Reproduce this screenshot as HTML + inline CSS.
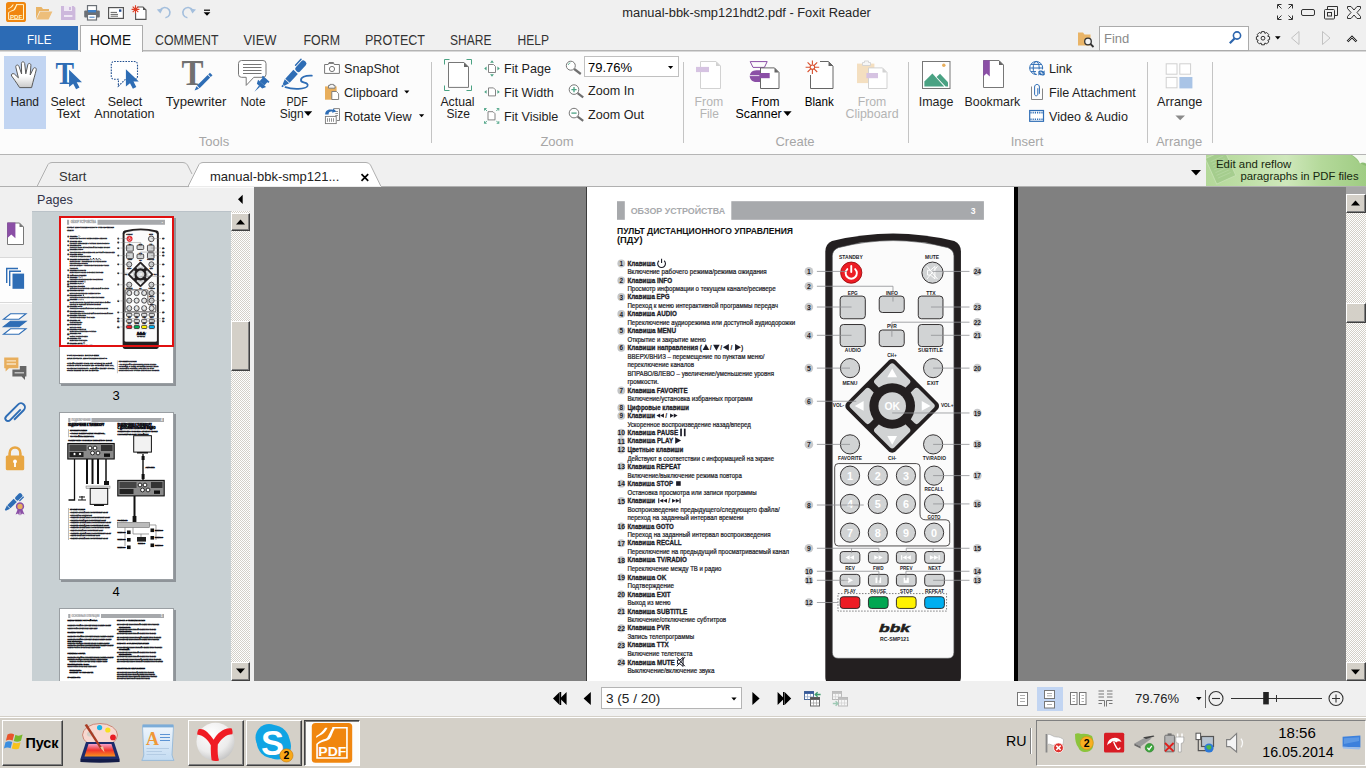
<!DOCTYPE html>
<html lang="ru">
<head>
<meta charset="utf-8">
<title>manual-bbk-smp121hdt2.pdf - Foxit Reader</title>
<style>
html,body{margin:0;padding:0;}
body{width:1366px;height:768px;overflow:hidden;position:relative;background:#f0f0f0;font-family:"Liberation Sans",sans-serif;font-size:13px;color:#1e1e1e;}
.a{position:absolute;}
.t{position:absolute;white-space:nowrap;line-height:1;}
.c{position:absolute;white-space:nowrap;line-height:1;text-align:center;}
svg{position:absolute;overflow:visible;}
.gl{color:#a6a6a6;}
.dis{color:#b4b4b4;}
</style>
</head>
<body>
<!-- ===== Title bar ===== -->
<div class="a" id="titlebar" style="left:0;top:0;width:1366px;height:25px;background:#f0f0f0;"></div>
<div class="c" style="left:546.6px;top:6.8px;width:400px;font-size:12.85px;color:#262626;">manual-bbk-smp121hdt2.pdf - Foxit Reader</div>
<!-- ===== Tab row ===== -->
<div class="a" style="left:0;top:50px;width:1366px;height:1px;background:#b4b4b4;"></div><div class="a" style="left:0;top:51px;width:1366px;height:1px;background:#d8d8d8;"></div>
<div class="a" style="left:0;top:26px;width:78px;height:24px;background:#2c6bb5;"></div>
<div class="a" style="left:80px;top:25px;width:61px;height:27px;background:#fdfdfd;border:1px solid #ababab;border-bottom:none;box-sizing:content-box;"></div>
<!-- find box -->
<div class="a" style="left:1099px;top:26px;width:150px;height:25px;background:#fff;border:1px solid #ababab;box-sizing:border-box;"></div>
<div class="t" style="left:1104px;top:32px;font-size:13px;color:#8a8a8a;">Find</div>
<svg style="left:0;top:26px;" width="600" height="26" viewBox="0 26 600 26" font-family="Liberation Sans, sans-serif" font-size="14.4">
<text x="27" y="44.3" fill="#fff" font-size="13.4" textLength="24.5" lengthAdjust="spacingAndGlyphs">FILE</text>
<text x="90" y="44.5" fill="#111" font-size="15" textLength="41" lengthAdjust="spacingAndGlyphs">HOME</text>
<text x="155" y="44.5" fill="#333" textLength="63.5" lengthAdjust="spacingAndGlyphs">COMMENT</text>
<text x="243.5" y="44.5" fill="#333" textLength="33" lengthAdjust="spacingAndGlyphs">VIEW</text>
<text x="303.5" y="44.5" fill="#333" textLength="36.5" lengthAdjust="spacingAndGlyphs">FORM</text>
<text x="365" y="44.5" fill="#333" textLength="60" lengthAdjust="spacingAndGlyphs">PROTECT</text>
<text x="450" y="44.5" fill="#333" textLength="41.5" lengthAdjust="spacingAndGlyphs">SHARE</text>
<text x="517.5" y="44.5" fill="#333" textLength="31.5" lengthAdjust="spacingAndGlyphs">HELP</text>
</svg>
<!-- title bar icons -->
<svg style="left:0;top:0;" width="220" height="26" viewBox="0 0 220 26">
  <!-- foxit logo -->
  <rect x="6" y="2" width="20" height="20" rx="2.600" fill="#f0860f"/>
  <path d="M16.200 4.600 H23.500 V19.400 H8.600 V12.400" fill="none" stroke="#fff3c8" stroke-width="1"/>
  <path d="M8.200 8.600 C10 7.600 11.400 6.200 12.600 4.400 L13.800 4.400 C13 6 12.200 7 11 7.800 C10 8.200 9 8.800 8.200 9.600 Z" fill="#fff3c8"/>
  <path d="M8.400 12.400 C10.400 10.200 12.400 10.400 13.600 9.400 C14.600 8 15.200 6 16.400 4.200 L17.400 4.800 C16.200 6.600 16 8.800 14.800 10 C13.400 11.200 10.600 11 8.800 13 Z" fill="#fff3c8"/>
  <text x="16.100" y="18.500" font-family="Liberation Sans, sans-serif" font-size="5.600" font-weight="bold" fill="#fff3c8" text-anchor="middle" textLength="12.400" lengthAdjust="spacingAndGlyphs">PDF</text>
  <!-- folder -->
  <path d="M36 7 H41.5 L43 9 H49 V11 H39.5 L36 19 Z" fill="#e9b467"/>
  <path d="M40.2 11.6 H52.4 L48.6 19.6 H36.4 Z" fill="#edbe7a"/>
  <!-- save (disabled) -->
  <path d="M61 6 H73.6 L75.4 7.8 V20 H61 Z" fill="#cdb8dc"/>
  <rect x="64" y="6" width="8" height="5" fill="#efe8f4"/><rect x="69" y="7" width="2" height="3" fill="#cdb8dc"/>
  <rect x="64" y="15" width="8.4" height="2" fill="#efe8f4"/>
  <!-- printer -->
  <rect x="87.5" y="5.6" width="9" height="6" fill="#fff" stroke="#6b7076" stroke-width="1.2"/>
  <rect x="84.2" y="10.6" width="15.6" height="7" rx="1" fill="#6b7076"/>
  <rect x="88" y="10" width="8" height="2.4" fill="#3f7fc6"/>
  <rect x="87.5" y="14.4" width="9" height="5.6" fill="#fff" stroke="#6b7076" stroke-width="1.2"/>
  <path d="M89.4 17.2 H94.6" stroke="#3f7fc6" stroke-width="1"/>
  <!-- email -->
  <rect x="108.6" y="7.6" width="14.8" height="10.8" fill="#fff" stroke="#555" stroke-width="1.2"/>
  <rect x="119" y="9.4" width="2.4" height="2.4" fill="#2a4f8f"/>
  <path d="M110.6 12.4 H117 M110.6 14.4 H118 M110.6 16.2 H118" stroke="#555" stroke-width="0.9"/>
  <!-- new: star + page -->
  <path d="M137.5 7 H143 L146 10 V19.4 H135.6 V13" fill="#fff" stroke="#555" stroke-width="1.1"/>
  <path d="M143 7 V10 H146 Z" fill="#555"/>
  <path d="M135.5 5.2 V13.6 M131.6 9.4 H139.4 M132.7 6.6 L138.3 12.2 M138.3 6.6 L132.7 12.2" stroke="#de3b22" stroke-width="1.1"/>
  <!-- undo / redo -->
  <path d="M160.2 10.2 A5.2 5.2 0 1 1 165.4 17.8" fill="none" stroke="#a4bfdd" stroke-width="1.6"/>
  <path d="M156.8 9.4 L163 8.6 L160.4 13.6Z" fill="#a4bfdd"/>
  <path d="M192.6 10.2 A5.2 5.2 0 1 0 187.4 17.8" fill="none" stroke="#a4bfdd" stroke-width="1.6"/>
  <path d="M196 9.4 L189.8 8.6 L192.4 13.6Z" fill="#a4bfdd"/>
  <!-- customize arrow -->
  <path d="M204 10.2 H210" stroke="#000" stroke-width="1.2"/><path d="M203.6 12.2 H210.4 L207 15.8Z" fill="#000"/>
</svg>
<!-- window controls -->
<svg style="left:1270px;top:0;" width="96" height="26" viewBox="1270 0 96 26" fill="none" stroke="#333" stroke-width="1">
  <path d="M1277.5 8.5 V4.5 H1281.5 M1278 5 L1281.5 8.5 M1288.5 4.5 H1292.5 V8.5 M1292 5 L1288.5 8.5 M1277.5 15.5 V19.5 H1281.5 M1278 19 L1281.5 15.5 M1292.5 15.5 V19.5 H1288.5 M1292 19 L1288.5 15.5"/>
  <rect x="1301.5" y="9.5" width="13" height="6" rx="1.5"/>
  <path d="M1327.5 9.5 V6.5 H1337.5 V15.5 H1334.5"/><rect x="1324.500" y="9.5" width="10" height="9.500" rx="1"/><rect x="1327.500" y="12.5" width="4" height="3.500"/>
  <path d="M1347.5 6.500 H1351 L1354 10 L1357 6.500 H1360.500 V8.500 L1357 12.500 L1360.500 16.500 V18.500 H1357 L1354 15 L1351 18.500 H1347.500 V16.500 L1351 12.500 L1347.500 8.500 Z"/>
</svg>
<!-- find area icons -->
<svg style="left:1070px;top:26px;" width="296" height="26" viewBox="1070 26 296 26">
  <path d="M1078 32.500 H1083 L1084.500 34.500 H1090.500 V45.500 H1078 Z" fill="#e9b467"/>
  <circle cx="1088" cy="41.500" r="3.300" fill="#f4f4f4" stroke="#333" stroke-width="1.300"/><path d="M1090.500 44 L1093.500 47" stroke="#333" stroke-width="1.800"/>
  <circle cx="1237" cy="35.500" r="3.600" fill="#fff" stroke="#2c65ad" stroke-width="1.600"/><path d="M1234.500 38.500 L1229.800 43.200" stroke="#2c65ad" stroke-width="2.200"/>
  <g transform="translate(1263,38.200)" fill="none" stroke="#333" stroke-width="1">
    <path d="M-1.400 -6.600 H1.400 L1.900 -4.800 L3.700 -5.700 L5.700 -3.700 L4.800 -1.900 L6.600 -1.400 V1.400 L4.800 1.900 L5.700 3.700 L3.700 5.700 L1.900 4.800 L1.400 6.600 H-1.400 L-1.900 4.800 L-3.700 5.700 L-5.700 3.700 L-4.800 1.900 L-6.600 1.400 V-1.400 L-4.800 -1.900 L-5.700 -3.700 L-3.700 -5.700 L-1.900 -4.800 Z"/>
    <circle r="1.900"/>
  </g>
  <path d="M1275 36.200 H1280.600 L1277.800 39.400Z" fill="#000"/>
  <path d="M1299 31.500 V44.500 L1291.500 38 Z" fill="none" stroke="#c2c2c2" stroke-width="1"/>
  <path d="M1322.500 31.500 V44.500 L1330 38 Z" fill="none" stroke="#c2c2c2" stroke-width="1"/>
  <path d="M1347.500 41.500 L1352 37 L1356.500 41.500" fill="none" stroke="#222" stroke-width="2.400"/>
  <path d="M1347.500 41.500 L1352 37 L1356.500 41.500" fill="none" stroke="#f0f0f0" stroke-width="0.700"/>
</svg>
<!-- ===== Ribbon ===== -->
<div class="a" id="ribbon" style="left:0;top:52px;width:1366px;height:102px;background:#fcfcfc;"></div>
<div class="a" style="left:0;top:154px;width:1366px;height:1px;background:#b5b5b5;"></div>
<!-- Hand (active) -->
<div class="a" style="left:4px;top:56px;width:42px;height:73px;background:#c2d5f2;"></div>
<div class="t" style="left:344px;top:62.8px;font-size:12.6px;">SnapShot</div>
<div class="t" style="left:344px;top:86.8px;font-size:12.6px;">Clipboard</div>
<div class="t" style="left:344px;top:110.8px;font-size:12.6px;">Rotate View</div>
<div class="c gl" style="left:184px;top:134.5px;width:60px;">Tools</div>
<div class="a" style="left:431px;top:62px;width:1px;height:81px;background:#c4c4c4;"></div>
<!-- Zoom group -->
<div class="t" style="left:504px;top:62.8px;font-size:12.6px;">Fit Page</div>
<div class="t" style="left:504px;top:86.8px;font-size:12.6px;">Fit Width</div>
<div class="t" style="left:504px;top:110.8px;font-size:12.6px;">Fit Visible</div>
<div class="a" style="left:584px;top:56px;width:95px;height:21px;background:#fff;border:1px solid #c0c0c0;box-sizing:border-box;"></div>
<div class="t" style="left:588px;top:61px;color:#000;">79.76%</div>
<div class="t" style="left:588px;top:84.8px;font-size:12.6px;">Zoom In</div>
<div class="t" style="left:588px;top:108.8px;font-size:12.6px;">Zoom Out</div>
<div class="c gl" style="left:527px;top:134.5px;width:60px;">Zoom</div>
<div class="a" style="left:683px;top:62px;width:1px;height:81px;background:#c4c4c4;"></div>
<!-- Create group -->
<div class="c gl" style="left:765px;top:134.5px;width:60px;">Create</div>
<div class="a" style="left:908px;top:62px;width:1px;height:81px;background:#c4c4c4;"></div>
<!-- Insert group -->
<div class="t" style="left:1049px;top:62.8px;font-size:12.6px;">Link</div>
<div class="t" style="left:1049px;top:86.8px;font-size:12.6px;">File Attachment</div>
<div class="t" style="left:1049px;top:110.8px;font-size:12.6px;">Video &amp; Audio</div>
<div class="c gl" style="left:997px;top:134.5px;width:60px;">Insert</div>
<div class="a" style="left:1147px;top:62px;width:1px;height:81px;background:#c4c4c4;"></div>
<div class="c gl" style="left:1139px;top:134.5px;width:80px;">Arrange</div>
<div class="a" style="left:1212px;top:62px;width:1px;height:81px;background:#c4c4c4;"></div>
<svg style="left:0;top:52px;" width="1366" height="102" viewBox="0 52 1366 102" font-family="Liberation Sans, sans-serif" font-size="13" text-anchor="middle">
<text x="24.7" y="106.4" fill="#1e1e1e" textLength="28.6" lengthAdjust="spacingAndGlyphs">Hand</text>
<text x="67.8" y="106.4" fill="#1e1e1e" textLength="34.5" lengthAdjust="spacingAndGlyphs">Select</text>
<text x="68.2" y="118.4" fill="#1e1e1e" textLength="23.6" lengthAdjust="spacingAndGlyphs">Text</text>
<text x="125" y="106.4" fill="#1e1e1e" textLength="34.5" lengthAdjust="spacingAndGlyphs">Select</text>
<text x="124.4" y="118.4" fill="#1e1e1e" textLength="60.3" lengthAdjust="spacingAndGlyphs">Annotation</text>
<text x="196.1" y="106.4" fill="#1e1e1e" textLength="60.6" lengthAdjust="spacingAndGlyphs">Typewriter</text>
<text x="253" y="106.4" fill="#1e1e1e" textLength="24.9" lengthAdjust="spacingAndGlyphs">Note</text>
<text x="297.1" y="106.4" fill="#1e1e1e" textLength="21.4" lengthAdjust="spacingAndGlyphs">PDF</text>
<text x="291.7" y="118.4" fill="#1e1e1e" textLength="23.9" lengthAdjust="spacingAndGlyphs">Sign</text>
<text x="457.5" y="106.4" fill="#1e1e1e" textLength="34.2" lengthAdjust="spacingAndGlyphs">Actual</text>
<text x="458.2" y="118.4" fill="#1e1e1e" textLength="23.4" lengthAdjust="spacingAndGlyphs">Size</text>
<text x="708.9" y="106.4" fill="#b4b4b4" textLength="28.6" lengthAdjust="spacingAndGlyphs">From</text>
<text x="709.3" y="118.4" fill="#b4b4b4" textLength="19.3" lengthAdjust="spacingAndGlyphs">File</text>
<text x="765.5" y="106.4" fill="#000" textLength="28" lengthAdjust="spacingAndGlyphs">From</text>
<text x="758.6" y="118.4" fill="#000" textLength="46.2" lengthAdjust="spacingAndGlyphs">Scanner</text>
<text x="819.3" y="106.4" fill="#000" textLength="29" lengthAdjust="spacingAndGlyphs">Blank</text>
<text x="872" y="106.4" fill="#b4b4b4" textLength="28.6" lengthAdjust="spacingAndGlyphs">From</text>
<text x="872" y="118.4" fill="#b4b4b4" textLength="53.1" lengthAdjust="spacingAndGlyphs">Clipboard</text>
<text x="936.1" y="106.4" fill="#1e1e1e" textLength="34.6" lengthAdjust="spacingAndGlyphs">Image</text>
<text x="992.4" y="106.4" fill="#1e1e1e" textLength="55.6" lengthAdjust="spacingAndGlyphs">Bookmark</text>
<text x="1179.7" y="106.4" fill="#1e1e1e" textLength="45.2" lengthAdjust="spacingAndGlyphs">Arrange</text>
</svg>
<!-- ribbon icons -->
<svg style="left:0;top:52px;" width="1366" height="102" viewBox="0 52 1366 102">
<defs>
  <linearGradient id="hg" x1="0" y1="0" x2="0" y2="1"><stop offset="0.55" stop-color="#fff"/><stop offset="1" stop-color="#c9c9c9"/></linearGradient>
</defs>
<!-- hand -->
<path d="M19.600 87.600 C16 82 13.500 78.500 11.600 76 C10.600 74.400 12.600 72.800 14.400 74 L18.400 77.800 L15.800 67.200 C15.400 64.800 18.200 64.200 19 66.400 L21.600 74 L21.400 63.600 C21.400 61.200 24.400 61.200 24.700 63.600 L25.800 73.800 L27.800 64.800 C28.300 62.600 31 63.200 30.900 65.400 L30.200 75 L33.200 68.800 C34.200 66.800 36.800 67.800 36.200 70 C35 75 33.400 80 31.600 87.600 Z" fill="url(#hg)" stroke="#5a5a5a" stroke-width="1" stroke-linejoin="round"/>
<!-- select text -->
<text x="64.700" y="84" font-family="Liberation Serif, serif" font-size="32" font-weight="bold" fill="#2e6db5" text-anchor="middle" textLength="18.500" lengthAdjust="spacingAndGlyphs">T</text>
<path id="cur" d="M0 0 V17.200 L4.100 14 L7 19.500 L10.400 17.700 L7.600 12.400 H12.900 Z" transform="translate(69.100,69.800)" fill="#2e6db5"/>
<!-- select annotation -->
<path d="M118.500 79.300 H114.500 Q111.300 79.300 111.300 76 V64.800 Q111.300 61.500 114.500 61.500 H134.300 Q137.500 61.500 137.500 64.800 V76 Q137.500 79.300 134.300 79.300 H125.500 L118.300 86.200 Z" fill="#fff" stroke="#1f4e8f" stroke-width="1.100" stroke-dasharray="1.600 1.200"/>
<path d="M0 0 V17.200 L4.100 14 L7 19.500 L10.400 17.700 L7.600 12.400 H12.900 Z" transform="translate(125.900,69.200)" fill="#2e6db5"/>
<!-- typewriter -->
<text x="192.500" y="85" font-family="Liberation Serif, serif" font-size="36.500" font-weight="bold" fill="#707070" text-anchor="middle" textLength="22" lengthAdjust="spacingAndGlyphs">T</text>
<g transform="translate(211.200,74) rotate(45)"><rect x="-1.800" y="0" width="3.600" height="2.400" fill="#2e6db5"/><rect x="-1.800" y="3.200" width="3.600" height="15" fill="#2e6db5"/><path d="M-1.800 19 H1.800 L0 23.500 Z" fill="#2e6db5"/></g>
<!-- note -->
<path d="M241.500 60.500 H263 Q266 60.500 266 63.500 V74.300 Q266 77.300 263 77.300 H253.800 L246.200 85.400 V77.300 H241.500 Q238.500 77.300 238.500 74.300 V63.500 Q238.500 60.500 241.500 60.500 Z" fill="#fff" stroke="#777" stroke-width="1"/>
<path d="M243 64.500 H261.500 M243 67.500 H261.500 M243 70.500 H261.500 M243 73.500 H261.500" stroke="#666" stroke-width="0.900"/>
<g transform="translate(260.200,85.400) rotate(42)" fill="#2e6db5"><rect x="-3.200" y="-8" width="6.400" height="5.400"/><path d="M-5.400 -2.800 H5.400 L3.600 1 H-3.600 Z"/><path d="M-0.800 1 H0.800 L0 8.600 Z"/><rect x="-4.400" y="-9" width="8.800" height="1.800"/></g>
<!-- pdf sign -->
<g transform="translate(305.200,61.400) rotate(42.500)" fill="#2e6db5"><rect x="-3" y="0" width="6" height="13" rx="2.400"/><rect x="-5.300" y="0.500" width="1.500" height="9.500" rx="0.700"/><rect x="-3" y="14.200" width="6" height="12"/><path d="M-3 27 H3 L1.200 32 H-1.200 Z"/><rect x="-0.900" y="32.400" width="1.800" height="2" /></g>
<path d="M311.800 75.600 C305 75.200 300.500 77.500 301 80.500 C301.500 83.500 309 82 307.500 86 C306 89.500 292 89.500 285.500 87.200" fill="none" stroke="#2e6db5" stroke-width="1.800" stroke-linecap="round"/>
<path d="M293.800 88 Q308.400 83.800 309.400 75.400 Q304.600 84.800 293.800 88Z" fill="#fff" opacity="0"/>
<path d="M304 111.300 H312.200 L308.100 116 Z" fill="#000"/>
<!-- snapshot -->
<path d="M324.600 64.500 H328.200 L329 62.600 H333.400 L334.200 64.500 H339.400 V73.400 H324.600 Z" fill="#fff" stroke="#777" stroke-width="1"/>
<rect x="329" y="62.300" width="4.400" height="1.600" fill="#777"/>
<circle cx="332" cy="69" r="2.600" fill="#fff" stroke="#777" stroke-width="1"/>
<!-- clipboard -->
<rect x="325" y="86.400" width="11.600" height="13.300" fill="#e8ae5c"/>
<path d="M328.500 88.200 V85.400 H330 V84.400 H333.600 V85.400 H335 V88.200 Z" fill="#f3f3f3" stroke="#777" stroke-width="0.900"/>
<path d="M331.800 91.500 H336.400 L338.600 93.700 V99.500 H331.800 Z" fill="#fff" stroke="#777" stroke-width="0.900"/>
<path d="M404.200 90.400 H409.400 L406.800 93.400 Z" fill="#000"/>
<!-- rotate view -->
<path d="M333.500 108.600 H339.500 V120.500 H336.600" fill="none" stroke="#777" stroke-width="0.900"/>
<path d="M335.300 111.500 H338 M335.300 113.500 H338 M335.300 115.500 H338" stroke="#777" stroke-width="0.800"/>
<rect x="325.400" y="116.400" width="10.800" height="7.200" fill="#fff" stroke="#777" stroke-width="0.900"/>
<path d="M327.500 118.200 V121.800 M329.500 118.200 V121.800 M331.500 118.200 V121.800 M333.500 118.200 V121.800" stroke="#777" stroke-width="0.800"/>
<path d="M325.200 114.600 C325 110.600 328.600 108.800 332.800 109.800 L333.200 108.400 L336.400 111.400 L332 112.800 L332.400 111.600 C329.800 111.200 328.400 112.400 328.600 114.600 Z" fill="#2e6db5"/>
<path d="M419 114.200 H424.200 L421.600 117.200 Z" fill="#000"/>
<!-- actual size -->
<path d="M448.500 62.500 H464 L468.500 67 V87.400 H448.500 Z" fill="#fff" stroke="#777" stroke-width="1"/>
<path d="M464 62.500 V67 H468.500 Z" fill="#666"/>
<path d="M444.500 64.500 V59.500 H449.500 M466.500 59.500 H471.500 V64.500 M444.500 85.500 V90.500 H449.500 M466.500 90.500 H471.500 V85.500" fill="none" stroke="#4aa283" stroke-width="1"/>
<!-- fit page -->
<g fill="#4aa283" stroke="none">
<path d="M488.500 64.500 H493.500 L495.500 66.500 V72.500 H488.500 Z" fill="#fff" stroke="#777" stroke-width="0.900"/>
<path d="M486.600 66.600 V70.400 L484.200 68.500 Z M497.400 66.600 V70.400 L499.800 68.500 Z M490.100 62.700 H493.900 L492 60.300 Z M490.100 74.300 H493.900 L492 76.700 Z"/>
<path d="M488.500 87.900 H493.500 L495.500 89.900 V95.900 H488.500 Z" fill="#fff" stroke="#777" stroke-width="0.900"/>
<path d="M486.600 90 V93.800 L484.200 91.900 Z M497.400 90 V93.800 L499.800 91.900 Z"/>
<path d="M488 111.700 H493 L495 113.700 V119.900 H488 Z" fill="#fff" stroke="#777" stroke-width="0.900"/>
</g>
<path d="M484.500 108.500 L487 111 M484.500 110.600 V108.500 H486.600 M498.800 108.500 L496.300 111 M498.800 110.600 V108.500 H496.700 M484.500 123.300 L487 120.800 M484.500 121.200 V123.300 H486.600 M498.800 123.300 L496.300 120.800 M498.800 121.200 V123.300 H496.700" fill="none" stroke="#4aa283" stroke-width="0.900"/>
<!-- magnifiers -->
<circle cx="570.800" cy="65.700" r="4.500" fill="#fff" stroke="#777" stroke-width="1"/><path d="M574.200 69 L580.800 74" stroke="#707070" stroke-width="2.200"/><path d="M568.200 65 Q568.600 63.200 570.400 62.800" fill="none" stroke="#4aa283" stroke-width="0.800"/>
<circle cx="574" cy="89.600" r="4.800" fill="#fff" stroke="#777" stroke-width="1"/><path d="M577.600 93.200 L583.200 97.400" stroke="#707070" stroke-width="2.200"/><path d="M571.400 89.600 H576.600 M574 87 V92.200" stroke="#4aa283" stroke-width="1.300"/>
<circle cx="574" cy="113.100" r="4.800" fill="#fff" stroke="#777" stroke-width="1"/><path d="M577.600 116.700 L583.200 120.900" stroke="#707070" stroke-width="2.200"/><path d="M571.400 113.100 H576.600" stroke="#4aa283" stroke-width="1.300"/>
<path d="M668 66 H673.200 L670.600 69 Z" fill="#000"/>
<!-- from file (disabled) -->
<path d="M700.500 61.500 H716 L720.500 66 V88.500 H700.500 Z" fill="#fff" stroke="#d2d2d2" stroke-width="1"/><path d="M716 61.500 V66 H720.500 Z" fill="#d2d2d2"/>
<rect x="696" y="66.900" width="13" height="5.200" fill="#d6c3e2"/>
<!-- from scanner -->
<path d="M750.200 61.600 H767.200 L764.400 67.400 H753 Z" fill="none" stroke="#8b4fa6" stroke-width="1"/>
<path d="M756.500 70.200 H764 V82 H756.500 C747.500 82 747.500 70.200 756.500 70.200 Z" fill="#8b4fa6"/>
<path d="M749.400 75.600 H762" stroke="#fff" stroke-width="0.800"/>
<path d="M760.500 67.900 H774.500 L779 72.400 V88.500 H760.500 Z" fill="#fff" stroke="#666" stroke-width="1"/><path d="M774.500 67.900 V72.400 H779 Z" fill="#666"/>
<rect x="759.300" y="73" width="10.400" height="5.200" fill="#8b4fa6"/>
<path d="M783.400 111.300 H791.600 L787.500 116 Z" fill="#000"/>
<!-- blank -->
<path d="M820 61.500 H828.500 L833 66 V88.500 H810.500 V75" fill="#fff" stroke="#666" stroke-width="1"/><path d="M828.500 61.500 V66 H833 Z" fill="#666"/>
<g transform="translate(812.400,67.200)" stroke="#d9502e" stroke-width="1.100" fill="none"><path d="M0 -6.800 V-2.400 M0 6.800 V2.400 M-6.800 0 H-2.400 M6.800 0 H2.400 M-4.800 -4.800 L-1.700 -1.700 M4.800 4.800 L1.700 1.700 M-4.800 4.800 L-1.700 1.700 M4.800 -4.800 L1.700 -1.700"/><circle r="2.200"/></g>
<!-- from clipboard (disabled) -->
<rect x="857" y="63.600" width="17.400" height="19.500" fill="#f4dfc0"/>
<path d="M862.500 65.500 V62.500 H864.500 V61 H868.500 V62.500 H870.500 V65.500 Z" fill="#f6f6f6" stroke="#d2d2d2" stroke-width="0.900"/>
<path d="M868.500 67.900 H882.500 L887 72.400 V88.500 H868.500 Z" fill="#fff" stroke="#d2d2d2" stroke-width="1"/><path d="M882.500 67.900 V72.400 H887 Z" fill="#d2d2d2"/>
<rect x="866.400" y="73" width="11.600" height="5.200" fill="#d6c3e2"/>
<!-- image -->
<rect x="922.500" y="61.500" width="27.500" height="27" fill="#fff" stroke="#777" stroke-width="1"/>
<path d="M924.400 86.400 V81.400 L932.400 73.400 L944.200 86.400 Z" fill="#4aa283"/><path d="M936.600 77 L940 73.800 L948 82.200 V86.400 H945.600 Z" fill="#4aa283"/>
<circle cx="943.800" cy="65.200" r="1.700" fill="#e8ae5c"/>
<!-- bookmark -->
<path d="M983.500 60.500 H999 L1003.500 65 V87.500 H983.500 Z" fill="#fff" stroke="#777" stroke-width="1"/><path d="M999 60.500 V65 H1003.500 Z" fill="#666"/>
<path d="M983.200 60.200 H989.800 V76.600 L986.500 73.400 L983.200 76.600 Z" fill="#8b4fa6"/>
<!-- link -->
<g fill="none" stroke="#2e6db5" stroke-width="1"><circle cx="1036.200" cy="68" r="6.500"/><ellipse cx="1036.200" cy="68" rx="3" ry="6.500"/><path d="M1029.700 68 H1042.700 M1031 64.400 H1041.400 M1031 71.600 H1036"/></g>
<rect x="1036.800" y="69.400" width="9" height="6.600" fill="#fcfcfc"/>
<path d="M1038 72.600 C1038 70 1042 70 1043.400 71.400 L1044.600 70.200 V73.600 H1041.200 L1042.400 72.400 C1041.400 71.400 1039.400 71.600 1039.400 72.800 Z M1045 73.400 C1045 76 1041 76 1039.600 74.600 L1038.400 75.800 V72.400 H1041.800 L1040.600 73.600 C1041.600 74.600 1043.600 74.400 1043.600 73.200 Z" fill="#2e6db5"/>
<!-- attachment -->
<path d="M1031.500 86.500 V99.500 H1042.500 V88.500" fill="none" stroke="#777" stroke-width="0.900"/>
<path d="M1039.400 93.800 V87 C1039.400 83.600 1034.600 83.600 1034.600 87 V94 C1034.600 96.400 1037.800 96.400 1037.800 94 V88.200" fill="none" stroke="#2e6db5" stroke-width="1"/>
<!-- video -->
<rect x="1029.700" y="110.500" width="13.800" height="10.800" fill="#fff" stroke="#2e6db5" stroke-width="1.200"/>
<path d="M1030.400 112.600 H1043 M1030.400 119.200 H1043" stroke="#2e6db5" stroke-width="1.600" stroke-dasharray="1.200 1"/>
<!-- arrange -->
<g fill="#fff" stroke="#d0d0d0" stroke-width="1"><rect x="1166.200" y="63.800" width="10.800" height="10.400"/><rect x="1179.800" y="63.800" width="10.800" height="10.400"/><rect x="1166.200" y="77.400" width="10.800" height="10.400"/></g>
<rect x="1179.400" y="77" width="13" height="11.400" fill="#a9c4e6"/>
<path d="M1175.400 115.400 H1185 L1180.200 120.200 Z" fill="#8a8a8a"/>
</svg>
<!-- ===== Document tab strip ===== -->
<div class="a" style="left:0;top:155px;width:1366px;height:31px;background:#f0f0f0;"></div>
<div class="a" style="left:0;top:186px;width:1366px;height:1px;background:#b0b0b0;"></div>
<svg style="left:0;top:155px;" width="400" height="33" viewBox="0 0 400 33">
  <path d="M37 31.5 L48 9.5 Q49 7.5 52 7.5 L183 7.5 Q186 7.5 187.5 10 L192 19" fill="none" stroke="#b0b0b0" stroke-width="1"/>
  <path d="M188 31.5 L199 9.5 Q200 7.5 203 7.5 L366 7.5 Q369 7.5 370.5 10 L381 31.5 Z" fill="#ffffff" stroke="#b0b0b0" stroke-width="1"/>
  <path d="M189 32 L381 32" stroke="#fff" stroke-width="1.5"/>
  <path d="M361.500 19.200 L368.200 25.800 M368.200 19.200 L361.500 25.800" stroke="#000" stroke-width="1.700"/>
</svg>
<div class="t" style="left:59px;top:170px;color:#333;">Start</div>
<div class="t" style="left:210px;top:170px;color:#222;">manual-bbk-smp121...</div>
<svg style="left:1190.500px;top:169px;" width="12" height="8"><path d="M0 1 L10 1 L5 6.5Z" fill="#000"/></svg>
<!-- green ad banner -->
<div class="a" style="left:1206px;top:155px;width:160px;height:31px;background:linear-gradient(90deg,#b3d899 0%,#bfdfa7 25%,#cfe8bb 50%,#b4d99a 72%,#9fcc83 100%);overflow:hidden;">
<svg style="left:0;top:0;" width="160" height="31" viewBox="1206 155 160 31">
  <g transform="translate(1221,168) rotate(-24)"><rect x="-10.500" y="-15" width="21" height="28" fill="#9fc888" opacity="0.750"/><rect x="-10.500" y="-15" width="21" height="28" fill="none" stroke="#c4e0b0" stroke-width="1"/>
  <path d="M-7 -10 H7 M-7 -7 H7 M-7 -4 H7 M-7 -1 H7 M-7 2 H7 M-7 5 H7 M-7 8 H7" stroke="#b4d6a0" stroke-width="0.800"/></g>
  <path d="M1351 155 H1366 V166 Q1361 164.500 1358 161 Q1355 157.500 1351 155 Z" fill="#8cbc74"/>
  <path d="M1352 155 H1366 V163.500 Q1362.500 161.500 1360 163.500 Q1358.500 159 1352 155 Z" fill="#f4f8f0"/>
</svg>
</div>
<div class="t" style="left:1216px;top:159px;font-size:11.4px;color:#16280f;">Edit and reflow</div>
<div class="t" style="left:1240.500px;top:171px;font-size:11.3px;color:#16280f;">paragraphs in PDF files</div>
<!-- ===== Left navigation column ===== -->
<div class="a" style="left:0;top:187px;width:32px;height:494px;background:#f0f0f0;"></div>
<div class="a" style="left:0;top:257px;width:32px;height:47px;background:#fdfdfd;"></div>
<!-- Pages panel -->
<div class="t" style="left:37px;top:194px;font-size:12.6px;color:#33334a;">Pages</div>
<svg style="left:237px;top:194px;" width="8" height="12"><path d="M5.700 0.700 L5.700 9.900 L1 5.300Z" fill="#000"/></svg>
<div class="a" id="thumbs" style="left:32px;top:211px;width:199px;height:470px;background:#c8d0d3;overflow:hidden;">
<div class="a" style="left:29px;top:7px;width:115px;height:168px;background:#8f9499;"></div>
<div class="a" style="left:27px;top:5px;width:115px;height:168px;background:#fff;box-sizing:border-box;border:1px solid #9a9fa3;overflow:hidden;">
<svg class="th th3" style="left:-1px;top:-1px;transform:scale(0.267);transform-origin:0 0;" width="427" height="625" viewBox="0 0 427 625" font-family="Liberation Sans, sans-serif">
<rect x="30" y="14.2" width="7.8" height="18.6" fill="#a7a9ac"/>
<rect x="144.3" y="14.2" width="252.6" height="18.6" fill="#a7a9ac"/>
<text x="43.7" y="26.9"  font-size="9.6" font-weight="bold" fill="#a7a9ac" textLength="94.5" lengthAdjust="spacingAndGlyphs">ОБЗОР УСТРОЙСТВА</text>
<text x="383.7" y="26.9"  font-size="8.6" font-weight="bold" fill="#fff">3</text>
<text x="30" y="46.6"  font-size="8.6" font-weight="bold" fill="#111" textLength="176" lengthAdjust="spacingAndGlyphs">ПУЛЬТ ДИСТАНЦИОННОГО УПРАВЛЕНИЯ</text>
<text x="30" y="55.5"  font-size="8.6" font-weight="bold" fill="#111" textLength="25.5" lengthAdjust="spacingAndGlyphs">(ПДУ)</text>
<circle cx="34.29" cy="76.49" r="3.9" fill="#c3c5c7"/>
<text x="34.29" y="79.09"  font-size="7" font-weight="bold" fill="#1d1d28" text-anchor="middle" textLength="3.6" lengthAdjust="spacingAndGlyphs">1</text>
<text x="40.39" y="78.69"  font-size="7.2" font-weight="bold" fill="#1d1d28" stroke="#1d1d28" stroke-width="0.3" textLength="27.8" lengthAdjust="spacingAndGlyphs">Клавиша</text>
<text x="40.39" y="86.82"  font-size="6.7" fill="#1d1d28" stroke="#1d1d28" stroke-width="0.22" textLength="139.4" lengthAdjust="spacingAndGlyphs">Включение рабочего режима/режима ожидания</text>
<circle cx="34.29" cy="93.42" r="3.9" fill="#c3c5c7"/>
<text x="34.29" y="96.02"  font-size="7" font-weight="bold" fill="#1d1d28" text-anchor="middle" textLength="3.6" lengthAdjust="spacingAndGlyphs">2</text>
<text x="40.39" y="95.62"  font-size="7.2" font-weight="bold" fill="#1d1d28" stroke="#1d1d28" stroke-width="0.3" textLength="44.7" lengthAdjust="spacingAndGlyphs">Клавиша INFO</text>
<text x="40.39" y="104.08"  font-size="6.7" fill="#1d1d28" stroke="#1d1d28" stroke-width="0.22" textLength="148.2" lengthAdjust="spacingAndGlyphs">Просмотр информации о текущем канале/ресивере</text>
<circle cx="34.29" cy="110.0" r="3.9" fill="#c3c5c7"/>
<text x="34.29" y="112.6"  font-size="7" font-weight="bold" fill="#1d1d28" text-anchor="middle" textLength="3.6" lengthAdjust="spacingAndGlyphs">3</text>
<text x="40.39" y="112.2"  font-size="7.2" font-weight="bold" fill="#1d1d28" stroke="#1d1d28" stroke-width="0.3" textLength="42.3" lengthAdjust="spacingAndGlyphs">Клавиша EPG</text>
<text x="40.39" y="121.0"  font-size="6.7" fill="#1d1d28" stroke="#1d1d28" stroke-width="0.22" textLength="150.6" lengthAdjust="spacingAndGlyphs">Переход к меню интерактивной программы передач</text>
<circle cx="34.29" cy="126.93" r="3.9" fill="#c3c5c7"/>
<text x="34.29" y="129.53"  font-size="7" font-weight="bold" fill="#1d1d28" text-anchor="middle" textLength="3.6" lengthAdjust="spacingAndGlyphs">4</text>
<text x="40.39" y="129.13"  font-size="7.2" font-weight="bold" fill="#1d1d28" stroke="#1d1d28" stroke-width="0.3" textLength="49.4" lengthAdjust="spacingAndGlyphs">Клавиша AUDIO</text>
<text x="40.39" y="137.93"  font-size="6.7" fill="#1d1d28" stroke="#1d1d28" stroke-width="0.22" textLength="167.9" lengthAdjust="spacingAndGlyphs">Переключение аудиорежима или доступной аудиодорожки</text>
<circle cx="34.29" cy="143.85" r="3.9" fill="#c3c5c7"/>
<text x="34.29" y="146.45"  font-size="7" font-weight="bold" fill="#1d1d28" text-anchor="middle" textLength="3.6" lengthAdjust="spacingAndGlyphs">5</text>
<text x="40.39" y="146.05"  font-size="7.2" font-weight="bold" fill="#1d1d28" stroke="#1d1d28" stroke-width="0.3" textLength="48.7" lengthAdjust="spacingAndGlyphs">Клавиша MENU</text>
<text x="40.39" y="154.85"  font-size="6.7" fill="#1d1d28" stroke="#1d1d28" stroke-width="0.22" textLength="78.5" lengthAdjust="spacingAndGlyphs">Открытие и закрытие меню</text>
<circle cx="34.29" cy="160.77" r="3.9" fill="#c3c5c7"/>
<text x="34.29" y="163.37"  font-size="7" font-weight="bold" fill="#1d1d28" text-anchor="middle" textLength="3.6" lengthAdjust="spacingAndGlyphs">6</text>
<text x="40.39" y="162.97"  font-size="7.2" font-weight="bold" fill="#1d1d28" stroke="#1d1d28" stroke-width="0.3" textLength="74.5" lengthAdjust="spacingAndGlyphs">Клавиши направления (</text>
<text x="40.39" y="171.77"  font-size="6.7" fill="#1d1d28" stroke="#1d1d28" stroke-width="0.22" textLength="137.1" lengthAdjust="spacingAndGlyphs">ВВЕРХ/ВНИЗ – перемещение по пунктам меню/</text>
<text x="40.39" y="180.23"  font-size="6.7" fill="#1d1d28" stroke="#1d1d28" stroke-width="0.22" textLength="66.7" lengthAdjust="spacingAndGlyphs">переключение каналов</text>
<text x="40.39" y="189.03"  font-size="6.7" fill="#1d1d28" stroke="#1d1d28" stroke-width="0.22" textLength="146.6" lengthAdjust="spacingAndGlyphs">ВПРАВО/ВЛЕВО – увеличение/уменьшение уровня</text>
<text x="40.39" y="197.16"  font-size="6.7" fill="#1d1d28" stroke="#1d1d28" stroke-width="0.22" textLength="31.5" lengthAdjust="spacingAndGlyphs">громкости.</text>
<circle cx="34.29" cy="203.42" r="3.9" fill="#c3c5c7"/>
<text x="34.29" y="206.02"  font-size="7" font-weight="bold" fill="#1d1d28" text-anchor="middle" textLength="3.6" lengthAdjust="spacingAndGlyphs">7</text>
<text x="40.39" y="205.62"  font-size="7.2" font-weight="bold" fill="#1d1d28" stroke="#1d1d28" stroke-width="0.3" textLength="60.2" lengthAdjust="spacingAndGlyphs">Клавиша FAVORITE</text>
<text x="40.39" y="214.08"  font-size="6.7" fill="#1d1d28" stroke="#1d1d28" stroke-width="0.22" textLength="125.2" lengthAdjust="spacingAndGlyphs">Включение/установка избранных программ</text>
<circle cx="34.29" cy="220.68" r="3.9" fill="#c3c5c7"/>
<text x="34.29" y="223.28"  font-size="7" font-weight="bold" fill="#1d1d28" text-anchor="middle" textLength="3.6" lengthAdjust="spacingAndGlyphs">8</text>
<text x="40.39" y="222.88"  font-size="7.2" font-weight="bold" fill="#1d1d28" stroke="#1d1d28" stroke-width="0.3" textLength="61.6" lengthAdjust="spacingAndGlyphs">Цифровые клавиши</text>
<circle cx="34.29" cy="228.8" r="3.9" fill="#c3c5c7"/>
<text x="34.29" y="231.4"  font-size="7" font-weight="bold" fill="#1d1d28" text-anchor="middle" textLength="3.6" lengthAdjust="spacingAndGlyphs">9</text>
<text x="40.39" y="231.0"  font-size="7.2" font-weight="bold" fill="#1d1d28" stroke="#1d1d28" stroke-width="0.3" textLength="27.8" lengthAdjust="spacingAndGlyphs">Клавиши</text>
<text x="40.39" y="239.8"  font-size="6.7" fill="#1d1d28" stroke="#1d1d28" stroke-width="0.22" textLength="123.5" lengthAdjust="spacingAndGlyphs">Ускоренное воспроизведение назад/вперед</text>
<circle cx="34.29" cy="245.73" r="3.9" fill="#c3c5c7"/>
<text x="34.29" y="248.33"  font-size="7" font-weight="bold" fill="#1d1d28" text-anchor="middle" textLength="7.4" lengthAdjust="spacingAndGlyphs">10</text>
<text x="40.39" y="247.93"  font-size="7.2" font-weight="bold" fill="#1d1d28" stroke="#1d1d28" stroke-width="0.3" textLength="50.8" lengthAdjust="spacingAndGlyphs">Клавиша PAUSE</text>
<circle cx="34.29" cy="254.05" r="3.9" fill="#c3c5c7"/>
<text x="34.29" y="256.65"  font-size="7" font-weight="bold" fill="#1d1d28" text-anchor="middle" textLength="7.4" lengthAdjust="spacingAndGlyphs">11</text>
<text x="40.39" y="256.25"  font-size="7.2" font-weight="bold" fill="#1d1d28" stroke="#1d1d28" stroke-width="0.3" textLength="45.7" lengthAdjust="spacingAndGlyphs">Клавиша PLAY</text>
<circle cx="34.29" cy="262.51" r="3.9" fill="#c3c5c7"/>
<text x="34.29" y="265.11"  font-size="7" font-weight="bold" fill="#1d1d28" text-anchor="middle" textLength="7.4" lengthAdjust="spacingAndGlyphs">12</text>
<text x="40.39" y="264.71"  font-size="7.2" font-weight="bold" fill="#1d1d28" stroke="#1d1d28" stroke-width="0.3" textLength="55.8" lengthAdjust="spacingAndGlyphs">Цветные клавиши</text>
<text x="40.39" y="273.85"  font-size="6.7" fill="#1d1d28" stroke="#1d1d28" stroke-width="0.22" textLength="146.6" lengthAdjust="spacingAndGlyphs">Действуют в соответствии с информацией на экране</text>
<circle cx="34.29" cy="279.44" r="3.9" fill="#c3c5c7"/>
<text x="34.29" y="282.04"  font-size="7" font-weight="bold" fill="#1d1d28" text-anchor="middle" textLength="7.4" lengthAdjust="spacingAndGlyphs">13</text>
<text x="40.39" y="281.64"  font-size="7.2" font-weight="bold" fill="#1d1d28" stroke="#1d1d28" stroke-width="0.3" textLength="53.5" lengthAdjust="spacingAndGlyphs">Клавиша REPEAT</text>
<text x="40.39" y="290.78"  font-size="6.7" fill="#1d1d28" stroke="#1d1d28" stroke-width="0.22" textLength="114.4" lengthAdjust="spacingAndGlyphs">Включение/выключение режима повтора</text>
<circle cx="34.29" cy="296.7" r="3.9" fill="#c3c5c7"/>
<text x="34.29" y="299.3"  font-size="7" font-weight="bold" fill="#1d1d28" text-anchor="middle" textLength="7.4" lengthAdjust="spacingAndGlyphs">14</text>
<text x="40.39" y="298.9"  font-size="7.2" font-weight="bold" fill="#1d1d28" stroke="#1d1d28" stroke-width="0.3" textLength="45.7" lengthAdjust="spacingAndGlyphs">Клавиша STOP</text>
<text x="40.39" y="307.7"  font-size="6.7" fill="#1d1d28" stroke="#1d1d28" stroke-width="0.22" textLength="129.3" lengthAdjust="spacingAndGlyphs">Остановка просмотра или записи программы</text>
<circle cx="34.29" cy="313.96" r="3.9" fill="#c3c5c7"/>
<text x="34.29" y="316.56"  font-size="7" font-weight="bold" fill="#1d1d28" text-anchor="middle" textLength="7.4" lengthAdjust="spacingAndGlyphs">15</text>
<text x="40.39" y="316.16"  font-size="7.2" font-weight="bold" fill="#1d1d28" stroke="#1d1d28" stroke-width="0.3" textLength="27.8" lengthAdjust="spacingAndGlyphs">Клавиши</text>
<text x="40.39" y="324.96"  font-size="6.7" fill="#1d1d28" stroke="#1d1d28" stroke-width="0.22" textLength="152.3" lengthAdjust="spacingAndGlyphs">Воспроизведение предыдущего/следующего файла/</text>
<text x="40.39" y="333.09"  font-size="6.7" fill="#1d1d28" stroke="#1d1d28" stroke-width="0.22" textLength="116.1" lengthAdjust="spacingAndGlyphs">переход на заданный интервал времени</text>
<circle cx="34.29" cy="339.35" r="3.9" fill="#c3c5c7"/>
<text x="34.29" y="341.95"  font-size="7" font-weight="bold" fill="#1d1d28" text-anchor="middle" textLength="7.4" lengthAdjust="spacingAndGlyphs">16</text>
<text x="40.39" y="341.55"  font-size="7.2" font-weight="bold" fill="#1d1d28" stroke="#1d1d28" stroke-width="0.3" textLength="46.4" lengthAdjust="spacingAndGlyphs">Клавиша GOTO</text>
<text x="40.39" y="350.01"  font-size="6.7" fill="#1d1d28" stroke="#1d1d28" stroke-width="0.22" textLength="143.2" lengthAdjust="spacingAndGlyphs">Переход на заданный интервал воспроизведения</text>
<circle cx="34.29" cy="356.27" r="3.9" fill="#c3c5c7"/>
<text x="34.29" y="358.87"  font-size="7" font-weight="bold" fill="#1d1d28" text-anchor="middle" textLength="7.4" lengthAdjust="spacingAndGlyphs">17</text>
<text x="40.39" y="358.47"  font-size="7.2" font-weight="bold" fill="#1d1d28" stroke="#1d1d28" stroke-width="0.3" textLength="54.2" lengthAdjust="spacingAndGlyphs">Клавиша RECALL</text>
<text x="40.39" y="366.93"  font-size="6.7" fill="#1d1d28" stroke="#1d1d28" stroke-width="0.22" textLength="161.8" lengthAdjust="spacingAndGlyphs">Переключение на предыдущий просматриваемый канал</text>
<circle cx="34.29" cy="373.19" r="3.9" fill="#c3c5c7"/>
<text x="34.29" y="375.79"  font-size="7" font-weight="bold" fill="#1d1d28" text-anchor="middle" textLength="7.4" lengthAdjust="spacingAndGlyphs">18</text>
<text x="40.39" y="375.39"  font-size="7.2" font-weight="bold" fill="#1d1d28" stroke="#1d1d28" stroke-width="0.3" textLength="59.6" lengthAdjust="spacingAndGlyphs">Клавиша TV/RADIO</text>
<text x="40.39" y="383.86"  font-size="6.7" fill="#1d1d28" stroke="#1d1d28" stroke-width="0.22" textLength="94.1" lengthAdjust="spacingAndGlyphs">Переключение между ТВ и радио</text>
<circle cx="34.29" cy="390.46" r="3.9" fill="#c3c5c7"/>
<text x="34.29" y="393.06"  font-size="7" font-weight="bold" fill="#1d1d28" text-anchor="middle" textLength="7.4" lengthAdjust="spacingAndGlyphs">19</text>
<text x="40.39" y="392.66"  font-size="7.2" font-weight="bold" fill="#1d1d28" stroke="#1d1d28" stroke-width="0.3" textLength="38.9" lengthAdjust="spacingAndGlyphs">Клавиша OK</text>
<text x="40.39" y="401.12"  font-size="6.7" fill="#1d1d28" stroke="#1d1d28" stroke-width="0.22" textLength="46.7" lengthAdjust="spacingAndGlyphs">Подтверждение</text>
<circle cx="34.29" cy="407.38" r="3.9" fill="#c3c5c7"/>
<text x="34.29" y="409.98"  font-size="7" font-weight="bold" fill="#1d1d28" text-anchor="middle" textLength="7.4" lengthAdjust="spacingAndGlyphs">20</text>
<text x="40.39" y="409.58"  font-size="7.2" font-weight="bold" fill="#1d1d28" stroke="#1d1d28" stroke-width="0.3" textLength="43.3" lengthAdjust="spacingAndGlyphs">Клавиша EXIT</text>
<text x="40.39" y="418.04"  font-size="6.7" fill="#1d1d28" stroke="#1d1d28" stroke-width="0.22" textLength="43.3" lengthAdjust="spacingAndGlyphs">Выход из меню</text>
<circle cx="34.29" cy="424.3" r="3.9" fill="#c3c5c7"/>
<text x="34.29" y="426.9"  font-size="7" font-weight="bold" fill="#1d1d28" text-anchor="middle" textLength="7.4" lengthAdjust="spacingAndGlyphs">21</text>
<text x="40.39" y="426.5"  font-size="7.2" font-weight="bold" fill="#1d1d28" stroke="#1d1d28" stroke-width="0.3" textLength="59.9" lengthAdjust="spacingAndGlyphs">Клавиша SUBTITLE</text>
<text x="40.39" y="434.96"  font-size="6.7" fill="#1d1d28" stroke="#1d1d28" stroke-width="0.22" textLength="98.8" lengthAdjust="spacingAndGlyphs">Включение/отключение субтитров</text>
<circle cx="34.29" cy="441.23" r="3.9" fill="#c3c5c7"/>
<text x="34.29" y="443.83"  font-size="7" font-weight="bold" fill="#1d1d28" text-anchor="middle" textLength="7.4" lengthAdjust="spacingAndGlyphs">22</text>
<text x="40.39" y="443.43"  font-size="7.2" font-weight="bold" fill="#1d1d28" stroke="#1d1d28" stroke-width="0.3" textLength="42.3" lengthAdjust="spacingAndGlyphs">Клавиша PVR</text>
<text x="40.39" y="451.89"  font-size="6.7" fill="#1d1d28" stroke="#1d1d28" stroke-width="0.22" textLength="66.7" lengthAdjust="spacingAndGlyphs">Запись телепрограммы</text>
<circle cx="34.29" cy="458.15" r="3.9" fill="#c3c5c7"/>
<text x="34.29" y="460.75"  font-size="7" font-weight="bold" fill="#1d1d28" text-anchor="middle" textLength="7.4" lengthAdjust="spacingAndGlyphs">23</text>
<text x="40.39" y="460.35"  font-size="7.2" font-weight="bold" fill="#1d1d28" stroke="#1d1d28" stroke-width="0.3" textLength="41.3" lengthAdjust="spacingAndGlyphs">Клавиша TTX</text>
<text x="40.39" y="468.81"  font-size="6.7" fill="#1d1d28" stroke="#1d1d28" stroke-width="0.22" textLength="65.0" lengthAdjust="spacingAndGlyphs">Включение телетекста</text>
<circle cx="34.29" cy="475.41" r="3.9" fill="#c3c5c7"/>
<text x="34.29" y="478.01"  font-size="7" font-weight="bold" fill="#1d1d28" text-anchor="middle" textLength="7.4" lengthAdjust="spacingAndGlyphs">24</text>
<text x="40.39" y="477.61"  font-size="7.2" font-weight="bold" fill="#1d1d28" stroke="#1d1d28" stroke-width="0.3" textLength="47.4" lengthAdjust="spacingAndGlyphs">Клавиша MUTE</text>
<text x="40.39" y="486.07"  font-size="6.7" fill="#1d1d28" stroke="#1d1d28" stroke-width="0.22" textLength="87.0" lengthAdjust="spacingAndGlyphs">Выключение/включение звука</text>
<path d="M71.97,73.72 A3.9 3.9 0 1 0 77.16999999999999,73.72" fill="none" stroke="#1d1d28" stroke-width="1.1"/><path d="M74.57,71.72 V75.91999999999999" stroke="#1d1d28" stroke-width="1.1"/>
<path d="M115.61,163.01 L122.21,163.01 L118.91,157.07Z" fill="#1d1d28"/>
<path d="M126.10000000000001,157.73000000000002 L132.70000000000002,157.73000000000002 L129.4,163.67000000000002Z" fill="#1d1d28"/>
<path d="M141.85999999999999,157.07 L141.85999999999999,163.67000000000002 L135.92,160.37Z" fill="#1d1d28"/>
<path d="M148.09,157.07 L148.09,163.67000000000002 L154.03,160.37Z" fill="#1d1d28"/>
<text x="122.63" y="162.97"  font-size="7" font-weight="bold" fill="#1d1d28">/</text>
<text x="133.13" y="162.97"  font-size="7" font-weight="bold" fill="#1d1d28">/</text>
<text x="143.62" y="162.97"  font-size="7" font-weight="bold" fill="#1d1d28">/</text>
<text x="154.11" y="162.97"  font-size="7" font-weight="bold" fill="#1d1d28">)</text>
<path d="M73.2,226.5 L73.2,230.7 L69.42,228.6Z" fill="#1d1d28"/>
<path d="M76.93,226.5 L76.93,230.7 L73.15,228.6Z" fill="#1d1d28"/>
<path d="M83.03999999999999,226.5 L83.03999999999999,230.7 L86.82,228.6Z" fill="#1d1d28"/>
<path d="M86.77,226.5 L86.77,230.7 L90.55,228.6Z" fill="#1d1d28"/>
<text x="78.29" y="231.0"  font-size="7" font-weight="bold" fill="#1d1d28">/</text>
<rect x="93.19" y="241.63" width="1.7" height="7.6" fill="#1d1d28"/><rect x="96.91" y="241.63" width="1.7" height="7.6" fill="#1d1d28"/>
<path d="M88.17999999999999,250.14999999999998 L88.17999999999999,256.75 L94.11999999999999,253.45Z" fill="#1d1d28"/>
<rect x="89.12" y="294.2" width="4.6" height="4.6" fill="#1d1d28"/>
<rect x="71.19" y="311.36" width="1.1" height="4.8" fill="#1d1d28"/>
<path d="M76.25,311.66 L76.25,315.86000000000007 L72.47,313.76000000000005Z" fill="#1d1d28"/>
<path d="M79.97000000000001,311.66 L79.97000000000001,315.86000000000007 L76.19000000000001,313.76000000000005Z" fill="#1d1d28"/>
<text x="81.34" y="316.16"  font-size="7" font-weight="bold" fill="#1d1d28">/</text>
<path d="M85.08,311.66 L85.08,315.86000000000007 L88.86,313.76000000000005Z" fill="#1d1d28"/>
<path d="M88.8,311.66 L88.8,315.86000000000007 L92.58,313.76000000000005Z" fill="#1d1d28"/>
<rect x="92.51" y="311.36" width="1.1" height="4.8" fill="#1d1d28"/>
<path d="M90.48,473.01 h2.4 l3.2,-2.6 v9 l-3.2,-2.6 h-2.4z" fill="none" stroke="#1d1d28" stroke-width="1"/><path d="M89.88000000000001,470.21000000000004 L97.88000000000001,479.21000000000004 M97.88000000000001,470.21000000000004 L89.88000000000001,479.21000000000004" stroke="#1d1d28" stroke-width="1"/>
<path d="M238.31,64.56 Q238.31,57.06 245.03,54.09 Q275.5,46.59 306.12,46.59 Q336.75,46.59 367.22,54.09 Q373.94,57.06 373.94,64.56 V490 Q373.94,498 365.94,498 H246.31 Q238.31,498 238.31,490 Z" fill="#231f20"/>
<path d="M245.34,69.25 Q245.34,63.0 251.28,60.66 Q278.62,53.62 306.12,53.62 Q333.62,53.62 360.97,60.66 Q366.91,63.0 366.91,69.25 V465.28 Q366.91,471.28 360.91,471.28 H251.34 Q245.34,471.28 245.34,465.28 Z" fill="#fbfbfb" stroke="#58595b" stroke-width="0.6"/>
<text x="263.94" y="72.09"  font-size="5.2" font-weight="bold" fill="#1d1d28" text-anchor="middle" textLength="23.8" lengthAdjust="spacingAndGlyphs">STANDBY</text>
<circle cx="264.25" cy="85.66" r="10.6" fill="#ed1c24" stroke="#9e0b0f" stroke-width="0.9"/>
<path d="M260.35,82.06 A5.6 5.6 0 1 0 268.15,82.06" fill="none" stroke="#fff" stroke-width="1.9" stroke-linecap="round"/><path d="M264.25,79.06 V85.06" stroke="#fff" stroke-width="1.9" stroke-linecap="round"/>
<text x="345.03" y="72.09"  font-size="5.2" font-weight="bold" fill="#1d1d28" text-anchor="middle" textLength="14" lengthAdjust="spacingAndGlyphs">MUTE</text>
<circle cx="345.5" cy="85.66" r="10.6" fill="#d1d3d4" stroke="#231f20" stroke-width="0.9"/>
<path d="M340.5,83.25999999999999 h3 l4.4,-3.8 v12.4 l-4.4,-3.8 h-3z" fill="none" stroke="#fff" stroke-width="1"/><path d="M339.9,79.25999999999999 L350.5,92.06 M350.5,79.25999999999999 L339.9,92.06" stroke="#fff" stroke-width="1"/>
<text x="265.81" y="108.03"  font-size="5.2" font-weight="bold" fill="#1d1d28" text-anchor="middle" textLength="10" lengthAdjust="spacingAndGlyphs">EPG</text>
<rect x="253.16" y="109.09" width="25.15" height="22.66" rx="3.2" fill="#d1d3d4" stroke="#231f20" stroke-width="0.9"/>
<text x="304.88" y="108.03"  font-size="5.2" font-weight="bold" fill="#1d1d28" text-anchor="middle" textLength="12" lengthAdjust="spacingAndGlyphs">INFO</text>
<rect x="292.22" y="109.09" width="25.0" height="16.41" rx="3.2" fill="#d1d3d4" stroke="#231f20" stroke-width="0.9"/>
<text x="343.94" y="108.03"  font-size="5.2" font-weight="bold" fill="#1d1d28" text-anchor="middle" textLength="9.5" lengthAdjust="spacingAndGlyphs">TTX</text>
<rect x="331.28" y="109.09" width="24.69" height="22.66" rx="3.2" fill="#d1d3d4" stroke="#231f20" stroke-width="0.9"/>
<rect x="253.16" y="137.53" width="25.15" height="22.03" rx="3.2" fill="#d1d3d4" stroke="#231f20" stroke-width="0.9"/>
<text x="265.81" y="165.22"  font-size="5.2" font-weight="bold" fill="#1d1d28" text-anchor="middle" textLength="16" lengthAdjust="spacingAndGlyphs">AUDIO</text>
<text x="304.88" y="141.31"  font-size="5.2" font-weight="bold" fill="#1d1d28" text-anchor="middle" textLength="10" lengthAdjust="spacingAndGlyphs">PVR</text>
<rect x="292.22" y="143.0" width="25.0" height="16.56" rx="3.2" fill="#d1d3d4" stroke="#231f20" stroke-width="0.9"/>
<rect x="331.28" y="137.53" width="24.69" height="22.03" rx="3.2" fill="#d1d3d4" stroke="#231f20" stroke-width="0.9"/>
<text x="343.47" y="165.22"  font-size="5.2" font-weight="bold" fill="#1d1d28" text-anchor="middle" textLength="25" lengthAdjust="spacingAndGlyphs">SUBTITLE</text>
<text x="304.88" y="170.22"  font-size="5.2" font-weight="bold" fill="#1d1d28" text-anchor="middle" textLength="9.5" lengthAdjust="spacingAndGlyphs">CH+</text>
<circle cx="263.0" cy="181.12" r="9.6" fill="#d1d3d4" stroke="#231f20" stroke-width="0.9"/>
<text x="263.0" y="198.03"  font-size="5.2" font-weight="bold" fill="#1d1d28" text-anchor="middle" textLength="15" lengthAdjust="spacingAndGlyphs">MENU</text>
<circle cx="346.12" cy="181.12" r="9.6" fill="#d1d3d4" stroke="#231f20" stroke-width="0.9"/>
<text x="345.81" y="198.03"  font-size="5.2" font-weight="bold" fill="#1d1d28" text-anchor="middle" textLength="11.5" lengthAdjust="spacingAndGlyphs">EXIT</text>
<g transform="translate(305.19,218.94) rotate(45)"><rect x="-34.6" y="-34.6" width="69.2" height="69.2" rx="5" fill="#231f20"/><rect x="-30.9" y="-30.9" width="27.3" height="27.3" rx="3" fill="#d1d3d4"/><rect x="3.6" y="-30.9" width="27.3" height="27.3" rx="3" fill="#d1d3d4"/><rect x="-30.9" y="3.6" width="27.3" height="27.3" rx="3" fill="#d1d3d4"/><rect x="3.6" y="3.6" width="27.3" height="27.3" rx="3" fill="#d1d3d4"/><circle r="22.8" fill="#231f20"/><circle r="13.8" fill="#d1d3d4"/></g>
<path d="M300.29,190.35999999999999 L310.09,190.35999999999999 L305.19,181.54Z" fill="#fff"/>
<path d="M300.29,249.02 L310.09,249.02 L305.19,257.84Z" fill="#fff"/>
<path d="M276.61,214.04 L276.61,223.84 L267.79,218.94Z" fill="#fff"/>
<path d="M334.77,214.04 L334.77,223.84 L343.59,218.94Z" fill="#fff"/>
<text x="305.19" y="223.14"  font-size="11.5" font-weight="bold" fill="#fff" text-anchor="middle" textLength="15.5" lengthAdjust="spacingAndGlyphs">OK</text>
<text x="257.22" y="219.91"  font-size="5.2" font-weight="bold" fill="#1d1d28" text-anchor="end" textLength="11.5" lengthAdjust="spacingAndGlyphs">VOL-</text>
<text x="353.94" y="219.91"  font-size="5.2" font-weight="bold" fill="#1d1d28" text-anchor="start" textLength="12.5" lengthAdjust="spacingAndGlyphs">VOL+</text>
<circle cx="263.0" cy="257.38" r="9.6" fill="#d1d3d4" stroke="#231f20" stroke-width="0.9"/>
<text x="263.0" y="273.19"  font-size="5.2" font-weight="bold" fill="#1d1d28" text-anchor="middle" textLength="24" lengthAdjust="spacingAndGlyphs">FAVORITE</text>
<text x="305.19" y="273.19"  font-size="5.2" font-weight="bold" fill="#1d1d28" text-anchor="middle" textLength="8.5" lengthAdjust="spacingAndGlyphs">CH-</text>
<circle cx="346.12" cy="257.38" r="9.6" fill="#d1d3d4" stroke="#231f20" stroke-width="0.9"/>
<text x="347.38" y="273.19"  font-size="5.2" font-weight="bold" fill="#1d1d28" text-anchor="middle" textLength="23.5" lengthAdjust="spacingAndGlyphs">TV/RADIO</text>
<path d="M251.28,276.59 H329.41 Q333.0,276.59 333.0,280.19 V327.06 Q333.0,332.84 338.78,332.84 H359.09 Q362.69,332.84 362.69,336.44 V355.5 Q362.69,358.94 359.09,358.94 H251.28 Q247.69,358.94 247.69,355.5 V280.19 Q247.69,276.59 251.28,276.59Z" fill="none" stroke="#231f20" stroke-width="0.8"/>
<circle cx="263.0" cy="288.62" r="9.6" fill="#d1d3d4" stroke="#231f20" stroke-width="0.9"/>
<text x="263.0" y="292.52"  font-size="11.4" font-weight="bold" fill="#fff" text-anchor="middle" textLength="6" lengthAdjust="spacingAndGlyphs">1</text>
<circle cx="290.81" cy="288.62" r="9.6" fill="#d1d3d4" stroke="#231f20" stroke-width="0.9"/>
<text x="290.81" y="292.52"  font-size="11.4" font-weight="bold" fill="#fff" text-anchor="middle" textLength="6" lengthAdjust="spacingAndGlyphs">2</text>
<circle cx="318.94" cy="288.62" r="9.6" fill="#d1d3d4" stroke="#231f20" stroke-width="0.9"/>
<text x="318.94" y="292.52"  font-size="11.4" font-weight="bold" fill="#fff" text-anchor="middle" textLength="6" lengthAdjust="spacingAndGlyphs">3</text>
<circle cx="263.0" cy="316.91" r="9.6" fill="#d1d3d4" stroke="#231f20" stroke-width="0.9"/>
<text x="263.0" y="320.81"  font-size="11.4" font-weight="bold" fill="#fff" text-anchor="middle" textLength="6" lengthAdjust="spacingAndGlyphs">4</text>
<circle cx="290.81" cy="316.91" r="9.6" fill="#d1d3d4" stroke="#231f20" stroke-width="0.9"/>
<text x="290.81" y="320.81"  font-size="11.4" font-weight="bold" fill="#fff" text-anchor="middle" textLength="6" lengthAdjust="spacingAndGlyphs">5</text>
<circle cx="318.94" cy="316.91" r="9.6" fill="#d1d3d4" stroke="#231f20" stroke-width="0.9"/>
<text x="318.94" y="320.81"  font-size="11.4" font-weight="bold" fill="#fff" text-anchor="middle" textLength="6" lengthAdjust="spacingAndGlyphs">6</text>
<circle cx="263.0" cy="345.66" r="9.6" fill="#d1d3d4" stroke="#231f20" stroke-width="0.9"/>
<text x="263.0" y="349.56"  font-size="11.4" font-weight="bold" fill="#fff" text-anchor="middle" textLength="6" lengthAdjust="spacingAndGlyphs">7</text>
<circle cx="290.81" cy="345.66" r="9.6" fill="#d1d3d4" stroke="#231f20" stroke-width="0.9"/>
<text x="290.81" y="349.56"  font-size="11.4" font-weight="bold" fill="#fff" text-anchor="middle" textLength="6" lengthAdjust="spacingAndGlyphs">8</text>
<circle cx="318.94" cy="345.66" r="9.6" fill="#d1d3d4" stroke="#231f20" stroke-width="0.9"/>
<text x="318.94" y="349.56"  font-size="11.4" font-weight="bold" fill="#fff" text-anchor="middle" textLength="6" lengthAdjust="spacingAndGlyphs">9</text>
<circle cx="347.06" cy="345.66" r="9.6" fill="#d1d3d4" stroke="#231f20" stroke-width="0.9"/>
<text x="347.06" y="349.56"  font-size="11.4" font-weight="bold" fill="#fff" text-anchor="middle" textLength="6" lengthAdjust="spacingAndGlyphs">0</text>
<circle cx="347.06" cy="288.62" r="9.6" fill="#d1d3d4" stroke="#231f20" stroke-width="0.9"/>
<text x="347.06" y="303.97"  font-size="5.2" font-weight="bold" fill="#1d1d28" text-anchor="middle" textLength="19" lengthAdjust="spacingAndGlyphs">RECALL</text>
<circle cx="347.06" cy="316.91" r="9.6" fill="#d1d3d4" stroke="#231f20" stroke-width="0.9"/>
<text x="347.06" y="332.25"  font-size="5.2" font-weight="bold" fill="#1d1d28" text-anchor="middle" textLength="13" lengthAdjust="spacingAndGlyphs">GOTO</text>
<rect x="253.16" y="364.56" width="19.68" height="11.72" rx="3" fill="#d1d3d4" stroke="#231f20" stroke-width="0.9"/>
<rect x="253.16" y="387.38" width="19.68" height="11.71" rx="3" fill="#d1d3d4" stroke="#231f20" stroke-width="0.9"/>
<rect x="281.44" y="364.56" width="19.68" height="11.72" rx="3" fill="#d1d3d4" stroke="#231f20" stroke-width="0.9"/>
<rect x="281.44" y="387.38" width="19.68" height="11.71" rx="3" fill="#d1d3d4" stroke="#231f20" stroke-width="0.9"/>
<rect x="309.41" y="364.56" width="19.68" height="11.72" rx="3" fill="#d1d3d4" stroke="#231f20" stroke-width="0.9"/>
<rect x="309.41" y="387.38" width="19.68" height="11.71" rx="3" fill="#d1d3d4" stroke="#231f20" stroke-width="0.9"/>
<rect x="337.69" y="364.56" width="19.69" height="11.72" rx="3" fill="#d1d3d4" stroke="#231f20" stroke-width="0.9"/>
<rect x="337.69" y="387.38" width="19.69" height="11.71" rx="3" fill="#d1d3d4" stroke="#231f20" stroke-width="0.9"/>
<text x="263.0" y="382.88"  font-size="5.2" font-weight="bold" fill="#1d1d28" text-anchor="middle" textLength="9.5" lengthAdjust="spacingAndGlyphs">REV</text>
<text x="291.28" y="382.88"  font-size="5.2" font-weight="bold" fill="#1d1d28" text-anchor="middle" textLength="10.5" lengthAdjust="spacingAndGlyphs">FWD</text>
<text x="319.25" y="382.88"  font-size="5.2" font-weight="bold" fill="#1d1d28" text-anchor="middle" textLength="12.5" lengthAdjust="spacingAndGlyphs">PREV</text>
<text x="347.53" y="382.88"  font-size="5.2" font-weight="bold" fill="#1d1d28" text-anchor="middle" textLength="12.5" lengthAdjust="spacingAndGlyphs">NEXT</text>
<text x="263.0" y="405.84"  font-size="5.2" font-weight="bold" fill="#1d1d28" text-anchor="middle" textLength="11.5" lengthAdjust="spacingAndGlyphs">PLAY</text>
<text x="291.28" y="405.84"  font-size="5.2" font-weight="bold" fill="#1d1d28" text-anchor="middle" textLength="16" lengthAdjust="spacingAndGlyphs">PAUSE</text>
<text x="319.25" y="405.84"  font-size="5.2" font-weight="bold" fill="#1d1d28" text-anchor="middle" textLength="12.5" lengthAdjust="spacingAndGlyphs">STOP</text>
<text x="347.53" y="405.84"  font-size="5.2" font-weight="bold" fill="#1d1d28" text-anchor="middle" textLength="19" lengthAdjust="spacingAndGlyphs">REPEAT</text>
<path d="M262.64,368.2 L262.64,372.8 L258.5,370.5Z" fill="#fff"/>
<path d="M267.03999999999996,368.2 L267.03999999999996,372.8 L262.9,370.5Z" fill="#fff"/>
<path d="M287.24,368.2 L287.24,372.8 L291.38,370.5Z" fill="#fff"/>
<path d="M291.64000000000004,368.2 L291.64000000000004,372.8 L295.78000000000003,370.5Z" fill="#fff"/>
<rect x="314.05" y="368.2" width="1.2" height="4.6" fill="#fff"/>
<path d="M319.69,368.2 L319.69,372.8 L315.55,370.5Z" fill="#fff"/>
<path d="M323.89,368.2 L323.89,372.8 L319.75,370.5Z" fill="#fff"/>
<path d="M342.89000000000004,368.2 L342.89000000000004,372.8 L347.03000000000003,370.5Z" fill="#fff"/>
<path d="M347.09000000000003,368.2 L347.09000000000003,372.8 L351.23,370.5Z" fill="#fff"/>
<rect x="351.53" y="368.2" width="1.2" height="4.6" fill="#fff"/>
<path d="M261.07,390.51 L261.07,396.11 L266.11,393.31Z" fill="#fff"/>
<rect x="257.4" y="392.81" width="4" height="1" fill="#fff"/>
<rect x="288.47999999999996" y="390.51" width="1.8" height="5.6" fill="#fff"/><rect x="292.28" y="390.51" width="1.8" height="5.6" fill="#fff"/>
<rect x="316.65" y="390.71" width="5.2" height="5.2" fill="#fff"/>
<rect x="250.97" y="406.59" width="108.59" height="17.5" fill="none" stroke="#6d6e70" stroke-width="0.9" stroke-dasharray="1.5 1.5"/>
<rect x="253.16" y="409.72" width="19.68" height="11.72" rx="3" fill="#ed1c24" stroke="#231f20" stroke-width="0.9"/>
<rect x="281.44" y="409.72" width="19.68" height="11.72" rx="3" fill="#00a651" stroke="#231f20" stroke-width="0.9"/>
<rect x="309.41" y="409.72" width="19.68" height="11.72" rx="3" fill="#fff200" stroke="#231f20" stroke-width="0.9"/>
<rect x="337.69" y="409.72" width="19.69" height="11.72" rx="3" fill="#00aeef" stroke="#231f20" stroke-width="0.9"/>
<text x="307.53" y="444.88"  font-size="11.6" font-weight="bold" font-style="italic" fill="#231f20" stroke="#231f20" stroke-width="0.5" text-anchor="middle" textLength="31" lengthAdjust="spacingAndGlyphs">bbk</text>
<text x="307.53" y="453.81"  font-size="5.4" font-weight="bold" fill="#1d1d28" text-anchor="middle" textLength="29" lengthAdjust="spacingAndGlyphs">RC-SMP121</text>
<path d="M229.88,84.41 H259.88" fill="none" stroke="#8f9194" stroke-width="0.8"/>
<path d="M229.88,99.25 H305.97 V114.56" fill="none" stroke="#8f9194" stroke-width="0.8"/>
<path d="M229.88,120.03 H264.56" fill="none" stroke="#8f9194" stroke-width="0.8"/>
<path d="M229.88,148.31 H264.56" fill="none" stroke="#8f9194" stroke-width="0.8"/>
<path d="M229.88,181.12 H263.0" fill="none" stroke="#8f9194" stroke-width="0.8"/>
<path d="M229.88,214.25 H269.25" fill="none" stroke="#8f9194" stroke-width="0.8"/>
<path d="M229.88,257.38 H263.0" fill="none" stroke="#8f9194" stroke-width="0.8"/>
<path d="M229.88,318.0 H276.75" fill="none" stroke="#8f9194" stroke-width="0.8"/>
<path d="M229.88,361.28 H291.91 V366.12 M264.56,361.28 V366.12" fill="none" stroke="#8f9194" stroke-width="0.8"/>
<path d="M229.88,384.25 H291.91 V393.31" fill="none" stroke="#8f9194" stroke-width="0.8"/>
<path d="M229.88,393.31 H261.44" fill="none" stroke="#8f9194" stroke-width="0.8"/>
<path d="M229.88,415.5 H250.97" fill="none" stroke="#8f9194" stroke-width="0.8"/>
<path d="M382.53,84.41 H345.5" fill="none" stroke="#8f9194" stroke-width="0.8"/>
<path d="M382.53,120.03 H343.94" fill="none" stroke="#8f9194" stroke-width="0.8"/>
<path d="M382.53,135.19 H304.88 V149.72" fill="none" stroke="#8f9194" stroke-width="0.8"/>
<path d="M382.53,148.31 H343.94" fill="none" stroke="#8f9194" stroke-width="0.8"/>
<path d="M382.53,181.12 H346.12" fill="none" stroke="#8f9194" stroke-width="0.8"/>
<path d="M382.53,225.97 H305.19" fill="none" stroke="#8f9194" stroke-width="0.8"/>
<path d="M382.53,257.38 H346.12" fill="none" stroke="#8f9194" stroke-width="0.8"/>
<path d="M382.53,288.62 H346.12" fill="none" stroke="#8f9194" stroke-width="0.8"/>
<path d="M382.53,316.91 H346.12" fill="none" stroke="#8f9194" stroke-width="0.8"/>
<path d="M382.53,361.28 H319.25 V366.12 M346.12,361.28 V366.12" fill="none" stroke="#8f9194" stroke-width="0.8"/>
<path d="M382.53,384.25 H318.94 V393.31" fill="none" stroke="#8f9194" stroke-width="0.8"/>
<path d="M382.53,393.31 H346.12" fill="none" stroke="#8f9194" stroke-width="0.8"/>
<circle cx="221.91" cy="84.41" r="4.3" fill="#c8c9cb"/>
<text x="221.91" y="87.21"  font-size="7.8" font-weight="bold" fill="#1d1d28" text-anchor="middle" textLength="3.8" lengthAdjust="spacingAndGlyphs">1</text>
<circle cx="221.91" cy="99.25" r="4.3" fill="#c8c9cb"/>
<text x="221.91" y="102.05"  font-size="7.8" font-weight="bold" fill="#1d1d28" text-anchor="middle" textLength="3.8" lengthAdjust="spacingAndGlyphs">2</text>
<circle cx="221.91" cy="120.03" r="4.3" fill="#c8c9cb"/>
<text x="221.91" y="122.83"  font-size="7.8" font-weight="bold" fill="#1d1d28" text-anchor="middle" textLength="3.8" lengthAdjust="spacingAndGlyphs">3</text>
<circle cx="221.91" cy="148.31" r="4.3" fill="#c8c9cb"/>
<text x="221.91" y="151.11"  font-size="7.8" font-weight="bold" fill="#1d1d28" text-anchor="middle" textLength="3.8" lengthAdjust="spacingAndGlyphs">4</text>
<circle cx="221.91" cy="181.12" r="4.3" fill="#c8c9cb"/>
<text x="221.91" y="183.92"  font-size="7.8" font-weight="bold" fill="#1d1d28" text-anchor="middle" textLength="3.8" lengthAdjust="spacingAndGlyphs">5</text>
<circle cx="221.91" cy="214.25" r="4.3" fill="#c8c9cb"/>
<text x="221.91" y="217.05"  font-size="7.8" font-weight="bold" fill="#1d1d28" text-anchor="middle" textLength="3.8" lengthAdjust="spacingAndGlyphs">6</text>
<circle cx="221.91" cy="257.38" r="4.3" fill="#c8c9cb"/>
<text x="221.91" y="260.18"  font-size="7.8" font-weight="bold" fill="#1d1d28" text-anchor="middle" textLength="3.8" lengthAdjust="spacingAndGlyphs">7</text>
<circle cx="221.91" cy="318.0" r="4.3" fill="#c8c9cb"/>
<text x="221.91" y="320.8"  font-size="7.8" font-weight="bold" fill="#1d1d28" text-anchor="middle" textLength="3.8" lengthAdjust="spacingAndGlyphs">8</text>
<circle cx="221.91" cy="361.28" r="4.3" fill="#c8c9cb"/>
<text x="221.91" y="364.08"  font-size="7.8" font-weight="bold" fill="#1d1d28" text-anchor="middle" textLength="3.8" lengthAdjust="spacingAndGlyphs">9</text>
<circle cx="221.91" cy="384.25" r="4.3" fill="#c8c9cb"/>
<text x="221.91" y="387.05"  font-size="7.8" font-weight="bold" fill="#1d1d28" text-anchor="middle" textLength="7.2" lengthAdjust="spacingAndGlyphs">10</text>
<circle cx="221.91" cy="393.31" r="4.3" fill="#c8c9cb"/>
<text x="221.91" y="396.11"  font-size="7.8" font-weight="bold" fill="#1d1d28" text-anchor="middle" textLength="7.2" lengthAdjust="spacingAndGlyphs">11</text>
<circle cx="221.91" cy="415.5" r="4.3" fill="#c8c9cb"/>
<text x="221.91" y="418.3"  font-size="7.8" font-weight="bold" fill="#1d1d28" text-anchor="middle" textLength="7.2" lengthAdjust="spacingAndGlyphs">12</text>
<circle cx="390.34" cy="84.41" r="4.3" fill="#c8c9cb"/>
<text x="390.34" y="87.21"  font-size="7.8" font-weight="bold" fill="#1d1d28" text-anchor="middle" textLength="7.2" lengthAdjust="spacingAndGlyphs">24</text>
<circle cx="390.34" cy="120.03" r="4.3" fill="#c8c9cb"/>
<text x="390.34" y="122.83"  font-size="7.8" font-weight="bold" fill="#1d1d28" text-anchor="middle" textLength="7.2" lengthAdjust="spacingAndGlyphs">23</text>
<circle cx="390.34" cy="135.19" r="4.3" fill="#c8c9cb"/>
<text x="390.34" y="137.99"  font-size="7.8" font-weight="bold" fill="#1d1d28" text-anchor="middle" textLength="7.2" lengthAdjust="spacingAndGlyphs">22</text>
<circle cx="390.34" cy="148.31" r="4.3" fill="#c8c9cb"/>
<text x="390.34" y="151.11"  font-size="7.8" font-weight="bold" fill="#1d1d28" text-anchor="middle" textLength="7.2" lengthAdjust="spacingAndGlyphs">21</text>
<circle cx="390.34" cy="181.12" r="4.3" fill="#c8c9cb"/>
<text x="390.34" y="183.92"  font-size="7.8" font-weight="bold" fill="#1d1d28" text-anchor="middle" textLength="7.2" lengthAdjust="spacingAndGlyphs">20</text>
<circle cx="390.34" cy="225.97" r="4.3" fill="#c8c9cb"/>
<text x="390.34" y="228.77"  font-size="7.8" font-weight="bold" fill="#1d1d28" text-anchor="middle" textLength="7.2" lengthAdjust="spacingAndGlyphs">19</text>
<circle cx="390.34" cy="257.38" r="4.3" fill="#c8c9cb"/>
<text x="390.34" y="260.18"  font-size="7.8" font-weight="bold" fill="#1d1d28" text-anchor="middle" textLength="7.2" lengthAdjust="spacingAndGlyphs">18</text>
<circle cx="390.34" cy="288.62" r="4.3" fill="#c8c9cb"/>
<text x="390.34" y="291.42"  font-size="7.8" font-weight="bold" fill="#1d1d28" text-anchor="middle" textLength="7.2" lengthAdjust="spacingAndGlyphs">17</text>
<circle cx="390.34" cy="316.91" r="4.3" fill="#c8c9cb"/>
<text x="390.34" y="319.71"  font-size="7.8" font-weight="bold" fill="#1d1d28" text-anchor="middle" textLength="7.2" lengthAdjust="spacingAndGlyphs">16</text>
<circle cx="390.34" cy="361.28" r="4.3" fill="#c8c9cb"/>
<text x="390.34" y="364.08"  font-size="7.8" font-weight="bold" fill="#1d1d28" text-anchor="middle" textLength="7.2" lengthAdjust="spacingAndGlyphs">15</text>
<circle cx="390.34" cy="384.25" r="4.3" fill="#c8c9cb"/>
<text x="390.34" y="387.05"  font-size="7.8" font-weight="bold" fill="#1d1d28" text-anchor="middle" textLength="7.2" lengthAdjust="spacingAndGlyphs">14</text>
<circle cx="390.34" cy="393.31" r="4.3" fill="#c8c9cb"/>
<text x="390.34" y="396.11"  font-size="7.8" font-weight="bold" fill="#1d1d28" text-anchor="middle" textLength="7.2" lengthAdjust="spacingAndGlyphs">13</text>
<text x="30" y="526"  font-size="8.6" font-weight="bold" fill="#111" textLength="120" lengthAdjust="spacingAndGlyphs">УСТАНОВКА БАТАРЕЕК</text>
<text x="30" y="537"  font-size="8.6" font-weight="bold" fill="#111" textLength="150" lengthAdjust="spacingAndGlyphs">ДЛЯ ПУЛЬТА ДИСТАНЦИОННОГО</text>
<text x="30" y="555.0"  font-size="6.1" fill="#1d1d28" textLength="168" lengthAdjust="spacingAndGlyphs">Откройте крышку отсека для батареек на задней</text>
<text x="30" y="563.4"  font-size="6.1" fill="#1d1d28" textLength="176" lengthAdjust="spacingAndGlyphs">стороне пульта. Вставьте две батарейки типа ААА,</text>
<text x="30" y="571.8"  font-size="6.1" fill="#1d1d28" textLength="178" lengthAdjust="spacingAndGlyphs">соблюдая полярность. Закройте крышку отсека,</text>
<text x="30" y="580.2"  font-size="6.1" fill="#1d1d28" textLength="120" lengthAdjust="spacingAndGlyphs">слегка надавив на нее до щелчка.</text>
<rect x="217" y="541" width="2.6" height="48" fill="#a7a9ac"/>
<text x="224" y="548"  font-size="7" font-weight="bold" fill="#1d1d28" textLength="66" lengthAdjust="spacingAndGlyphs">ПРИМЕЧАНИЯ</text>
<text x="224" y="557.0"  font-size="6.1" fill="#1d1d28" textLength="140" lengthAdjust="spacingAndGlyphs">• Не используйте одновременно старые и новые</text>
<text x="224" y="565.4"  font-size="6.1" fill="#1d1d28" textLength="150" lengthAdjust="spacingAndGlyphs">батарейки, а также батарейки разных типов.</text>
<text x="224" y="573.8"  font-size="6.1" fill="#1d1d28" textLength="132" lengthAdjust="spacingAndGlyphs">• Извлекайте батарейки, если пульт не будет</text>
<text x="224" y="582.2"  font-size="6.1" fill="#1d1d28" textLength="152" lengthAdjust="spacingAndGlyphs">использоваться в течение длительного времени.</text>

</svg>
</div>
<div class="a" style="left:27px;top:5px;width:115px;height:131px;box-sizing:border-box;border:2px solid #e01010;"></div>
<div class="c" style="left:54px;top:178px;width:60px;font-size:13px;color:#000;">3</div>
<div class="a" style="left:29px;top:203px;width:115px;height:168px;background:#8f9499;"></div>
<div class="a" style="left:27px;top:201px;width:115px;height:168px;background:#fff;box-sizing:border-box;border:1px solid #9a9fa3;overflow:hidden;">
<svg class="th th4" style="left:-1px;top:-1px;transform:scale(0.267);transform-origin:0 0;" width="427" height="625" viewBox="0 0 114 166.9" font-family="Liberation Sans, sans-serif">
<rect x="9.2" y="6" width="2.2" height="4" fill="#a7a9ac"/><rect x="32.5" y="6" width="72.5" height="4" fill="#a7a9ac"/>
<text x="12.5" y="9.3" font-size="2.6" font-weight="bold" fill="#a7a9ac" textLength="19" lengthAdjust="spacingAndGlyphs">ПОДКЛЮЧЕНИЕ</text>
<text x="102" y="9.3" font-size="2.6" font-weight="bold" fill="#fff">4</text>
<text x="9.2" y="13.6" font-size="2.6" font-weight="bold" fill="#15151f" textLength="36" lengthAdjust="spacingAndGlyphs">ПОДКЛЮЧЕНИЕ К ТЕЛЕВИЗОРУ</text>
<text x="58.5" y="13.6" font-size="2.6" font-weight="bold" fill="#15151f" textLength="34" lengthAdjust="spacingAndGlyphs">ПОДКЛЮЧЕНИЕ К ТЕЛЕВИЗОРУ</text>
<text x="58.5" y="16.6" font-size="2.6" font-weight="bold" fill="#15151f" textLength="38" lengthAdjust="spacingAndGlyphs">С ДОПОЛНИТЕЛЬНЫМ ВИДЕО</text>
<rect x="9.2" y="17.2" width="0.8" height="8" fill="#a7a9ac"/>
<text x="11" y="19.2" font-size="2.3" font-weight="bold" fill="#15151f" textLength="17" lengthAdjust="spacingAndGlyphs">ПРИМЕЧАНИЯ</text>
<text x="11" y="22" font-size="2.2" fill="#15151f" textLength="35" lengthAdjust="spacingAndGlyphs">• Перед подключением убедитесь,</text>
<text x="11" y="24.6" font-size="2.2" fill="#15151f" textLength="24" lengthAdjust="spacingAndGlyphs">что устройства выключены.</text>
<text x="9.2" y="28.6" font-size="2.2" fill="#15151f" textLength="44" lengthAdjust="spacingAndGlyphs">Подключение с помощью композитного кабеля</text>
<text x="58.5" y="20" font-size="2.2" fill="#15151f" textLength="40" lengthAdjust="spacingAndGlyphs">Подключение с помощью антенного кабеля</text>
<text x="58.5" y="22.6" font-size="2.2" fill="#15151f" textLength="31" lengthAdjust="spacingAndGlyphs">к дополнительному устройству</text>
<rect x="8.8" y="31.5" width="46.4" height="15.5" fill="#8a8a8a" stroke="#111" stroke-width="1.1"/>
<rect x="10.5" y="33" width="17" height="6" fill="#444"/><rect x="10.5" y="40" width="14" height="5" fill="#222"/>
<circle cx="31" cy="36" r="1.9" fill="#fff" stroke="#111" stroke-width="0.9"/><circle cx="36" cy="36" r="1.9" fill="#fff" stroke="#111" stroke-width="0.9"/><circle cx="33.5" cy="41" r="1.9" fill="#fff" stroke="#111" stroke-width="0.9"/><circle cx="39" cy="41" r="1.9" fill="#fff" stroke="#111" stroke-width="0.9"/>
<rect x="42" y="33" width="11.5" height="6" fill="#333"/><rect x="45" y="41.5" width="6" height="3.4" fill="#111"/>
<circle cx="15.5" cy="42" r="1.6" fill="#fff" stroke="#111" stroke-width="0.8"/><circle cx="21" cy="42" r="1.6" fill="#fff" stroke="#111" stroke-width="0.8"/>
<path d="M15.5 47 V88 H9.5" fill="none" stroke="#111" stroke-width="1.3"/>
<path d="M28 47 V72 M33.5 47 V72 M39 47 V72" stroke="#111" stroke-width="2"/>
<path d="M47 47 V71" stroke="#111" stroke-width="1.5"/><rect x="45" y="69" width="5" height="4" fill="#111"/>
<path d="M19 88 H27 M23 84 V88 M20 85 L26 85" stroke="#111" stroke-width="1"/>
<rect x="27" y="74" width="24" height="2.6" fill="#ddd" stroke="#555" stroke-width="0.4"/>
<rect x="31.2" y="76.4" width="17.5" height="16" fill="#f2f2f2" stroke="#111" stroke-width="1"/><rect x="35" y="92.4" width="10" height="1.6" fill="#111"/>
<rect x="9.2" y="96" width="0.8" height="32" fill="#a7a9ac"/>
<text x="11" y="98.4" font-size="2.3" font-weight="bold" fill="#15151f" textLength="15" lengthAdjust="spacingAndGlyphs">ПРИМЕЧАНИЯ</text>
<text x="11" y="101.2" font-size="2.2" fill="#15151f" textLength="38" lengthAdjust="spacingAndGlyphs">• Подключите антенный кабель к соответствующему разъему</text>
<text x="11" y="103.75" font-size="2.2" fill="#15151f" textLength="22" lengthAdjust="spacingAndGlyphs">• Подключите антенный кабель к соответствующему разъему</text>
<text x="11" y="106.3" font-size="2.2" fill="#15151f" textLength="40" lengthAdjust="spacingAndGlyphs">• Подключите антенный кабель к соответствующему разъему</text>
<text x="11" y="108.85000000000001" font-size="2.2" fill="#15151f" textLength="36" lengthAdjust="spacingAndGlyphs">• Подключите антенный кабель к соответствующему разъему</text>
<text x="11" y="111.4" font-size="2.2" fill="#15151f" textLength="41" lengthAdjust="spacingAndGlyphs">• Подключите антенный кабель к соответствующему разъему</text>
<text x="11" y="113.95" font-size="2.2" fill="#15151f" textLength="39" lengthAdjust="spacingAndGlyphs">• Подключите антенный кабель к соответствующему разъему</text>
<text x="11" y="116.5" font-size="2.2" fill="#15151f" textLength="40" lengthAdjust="spacingAndGlyphs">• Подключите антенный кабель к соответствующему разъему</text>
<text x="11" y="119.05" font-size="2.2" fill="#15151f" textLength="33" lengthAdjust="spacingAndGlyphs">• Подключите антенный кабель к соответствующему разъему</text>
<text x="11" y="121.6" font-size="2.2" fill="#15151f" textLength="41" lengthAdjust="spacingAndGlyphs">• Подключите антенный кабель к соответствующему разъему</text>
<text x="11" y="124.15" font-size="2.2" fill="#15151f" textLength="30" lengthAdjust="spacingAndGlyphs">• Подключите антенный кабель к соответствующему разъему</text>
<text x="11" y="126.7" font-size="2.2" fill="#15151f" textLength="38" lengthAdjust="spacingAndGlyphs">• Подключите антенный кабель к соответствующему разъему</text>
<rect x="74.7" y="23.7" width="17.7" height="16.4" fill="#f2f2f2" stroke="#111" stroke-width="1"/><rect x="78" y="40.1" width="11" height="1.4" fill="#111"/>
<path d="M84 42 V68" stroke="#111" stroke-width="1.4"/><rect x="82.6" y="44" width="3" height="4" fill="#111"/><rect x="82.6" y="62" width="3" height="5" fill="#111"/>
<text x="86.5" y="56" font-size="1.8" fill="#15151f" textLength="9" lengthAdjust="spacingAndGlyphs">Антенна</text>
<rect x="58.8" y="68.4" width="46.4" height="15.5" fill="#8a8a8a" stroke="#111" stroke-width="1.1"/>
<rect x="60.5" y="70" width="17" height="6" fill="#444"/><rect x="60.5" y="77" width="14" height="5" fill="#222"/>
<circle cx="81" cy="73" r="1.9" fill="#fff" stroke="#111" stroke-width="0.9"/><circle cx="86" cy="73" r="1.9" fill="#fff" stroke="#111" stroke-width="0.9"/><circle cx="83.5" cy="78" r="1.9" fill="#fff" stroke="#111" stroke-width="0.9"/><circle cx="89" cy="78" r="1.9" fill="#fff" stroke="#111" stroke-width="0.9"/>
<rect x="92" y="70" width="11.5" height="6" fill="#333"/><rect x="95" y="78.5" width="6" height="3.4" fill="#111"/>
<path d="M75.5 84 V108" stroke="#111" stroke-width="2"/><rect x="73.6" y="104" width="3.8" height="6" fill="#111"/>
<rect x="58.5" y="110.5" width="32" height="5" fill="#bbb" stroke="#555" stroke-width="0.5"/>
<text x="58.5" y="109.4" font-size="1.8" fill="#15151f" textLength="10" lengthAdjust="spacingAndGlyphs">Ресивер</text>
<path d="M90.5 113 H97 V128 M66 115.5 V134 M74 115.5 V122 H90 M82 122 V128" fill="none" stroke="#777" stroke-width="0.7"/>
<rect x="68" y="118.5" width="3.6" height="3.6" fill="#111"/>
<rect x="68" y="126" width="3.6" height="3.6" fill="#111"/>
<rect x="68" y="133.5" width="3.6" height="3.6" fill="#111"/>
<rect x="91.5" y="116.5" width="3.6" height="3.6" fill="#111"/>
<rect x="91.5" y="124" width="3.6" height="3.6" fill="#111"/>
<rect x="91.5" y="131.5" width="3.6" height="3.6" fill="#111"/>
<rect x="78" y="125" width="9" height="4.6" fill="#222"/>
<text x="58.5" y="121" font-size="1.8" fill="#15151f" textLength="8" lengthAdjust="spacingAndGlyphs">Видео</text>
<text x="58.5" y="128.5" font-size="1.8" fill="#15151f" textLength="8" lengthAdjust="spacingAndGlyphs">Видео</text>
<text x="58.5" y="136" font-size="1.8" fill="#15151f" textLength="8" lengthAdjust="spacingAndGlyphs">Видео</text>
<text x="96" y="119" font-size="1.8" fill="#15151f" textLength="8" lengthAdjust="spacingAndGlyphs">Видео</text>
<text x="96" y="126.5" font-size="1.8" fill="#15151f" textLength="8" lengthAdjust="spacingAndGlyphs">Видео</text>
<text x="96" y="134" font-size="1.8" fill="#15151f" textLength="8" lengthAdjust="spacingAndGlyphs">Видео</text>
<text x="79" y="132" font-size="1.8" fill="#15151f" textLength="7" lengthAdjust="spacingAndGlyphs">Видео</text>
</svg>
</div>
<div class="c" style="left:54px;top:374px;width:60px;font-size:13px;color:#000;">4</div>
<div class="a" style="left:29px;top:399px;width:115px;height:168px;background:#8f9499;"></div>
<div class="a" style="left:27px;top:397px;width:115px;height:168px;background:#fff;box-sizing:border-box;border:1px solid #9a9fa3;overflow:hidden;">
<svg class="th th4" style="left:-1px;top:-1px;transform:scale(0.267);transform-origin:0 0;" width="427" height="625" viewBox="0 0 114 166.9" font-family="Liberation Sans, sans-serif">
<rect x="9.2" y="6" width="2.2" height="4" fill="#a7a9ac"/><rect x="42" y="6" width="63" height="4" fill="#a7a9ac"/>
<text x="12.5" y="9.3" font-size="2.6" font-weight="bold" fill="#a7a9ac" textLength="28" lengthAdjust="spacingAndGlyphs">ОСНОВНЫЕ ОПЕРАЦИИ</text>
<text x="102" y="9.3" font-size="2.6" font-weight="bold" fill="#fff">5</text>
<text x="8.4" y="13.2" font-size="2.3" font-weight="bold" fill="#15151f" textLength="30" lengthAdjust="spacingAndGlyphs">ВКЛЮЧЕНИЕ УСТРОЙСТВА</text>
<text x="8.4" y="18.4" font-size="2.2" fill="#15151f" textLength="43.7" lengthAdjust="spacingAndGlyphs">Подключите устройство к источнику питания и нажмите клавишу</text>
<text x="8.4" y="20.6" font-size="2.2" fill="#15151f" textLength="30" lengthAdjust="spacingAndGlyphs">Подключите устройство к источнику питания и нажмите клавишу</text>
<text x="8.4" y="25.2" font-size="2.3" font-weight="bold" fill="#15151f" textLength="16" lengthAdjust="spacingAndGlyphs">ВЫКЛЮЧЕНИЕ</text>
<text x="8.4" y="29.3" font-size="2.2" fill="#15151f" textLength="46" lengthAdjust="spacingAndGlyphs">Подключите устройство к источнику питания и нажмите клавишу</text>
<text x="8.4" y="31.8" font-size="2.2" fill="#15151f" textLength="44" lengthAdjust="spacingAndGlyphs">Подключите устройство к источнику питания и нажмите клавишу</text>
<text x="8.4" y="34.2" font-size="2.2" fill="#15151f" textLength="15" lengthAdjust="spacingAndGlyphs">на пульте.</text>
<text x="8.4" y="36.3" font-size="2.2" fill="#15151f" textLength="42" lengthAdjust="spacingAndGlyphs">Подключите устройство к источнику питания и нажмите клавишу</text>
<text x="8.4" y="38.3" font-size="2.2" fill="#15151f" textLength="46" lengthAdjust="spacingAndGlyphs">Подключите устройство к источнику питания и нажмите клавишу</text>
<text x="8.4" y="40.5" font-size="2.2" fill="#15151f" textLength="33" lengthAdjust="spacingAndGlyphs">Подключите устройство к источнику питания и нажмите клавишу</text>
<text x="8.4" y="46.2" font-size="2.3" font-weight="bold" fill="#15151f" textLength="18" lengthAdjust="spacingAndGlyphs">РЕЖИМЫ ЗВУКА</text>
<text x="8.4" y="50" font-size="2.2" fill="#15151f" textLength="46" lengthAdjust="spacingAndGlyphs">Подключите устройство к источнику питания и нажмите клавишу</text>
<text x="8.4" y="52.3" font-size="2.2" fill="#15151f" textLength="40" lengthAdjust="spacingAndGlyphs">Подключите устройство к источнику питания и нажмите клавишу</text>
<text x="10.4" y="54.5" font-size="2.2" fill="#15151f" textLength="38" lengthAdjust="spacingAndGlyphs">Подключите устройство к источнику питания и нажмите клавишу</text>
<text x="8.4" y="57.5" font-size="2.2" fill="#15151f" textLength="22" lengthAdjust="spacingAndGlyphs">несколько раз.</text>
<text x="8.4" y="59.4" font-size="2.2" fill="#15151f" textLength="29" lengthAdjust="spacingAndGlyphs">Подключите устройство к источнику питания и нажмите клавишу</text>
<text x="10.4" y="63" font-size="2.3" font-weight="bold" fill="#15151f" textLength="12" lengthAdjust="spacingAndGlyphs">Примечание</text>
<text x="10.4" y="65.2" font-size="2.2" fill="#15151f" textLength="24" lengthAdjust="spacingAndGlyphs">Зависит от передачи.</text>
<text x="8.4" y="70.2" font-size="2.3" font-weight="bold" fill="#15151f" textLength="13" lengthAdjust="spacingAndGlyphs">ГРОМКОСТЬ</text>
<text x="57.9" y="13.2" font-size="2.3" font-weight="bold" fill="#15151f" textLength="28" lengthAdjust="spacingAndGlyphs">РАБОТА С ТЕЛЕКАНАЛАМИ</text>
<text x="57.9" y="17.3" font-size="2.2" fill="#15151f" textLength="42" lengthAdjust="spacingAndGlyphs">Для переключения каналов используйте клавиши пульта управления</text>
<text x="59.9" y="20" font-size="2.2" fill="#15151f" textLength="12" lengthAdjust="spacingAndGlyphs">каналов.</text>
<text x="57.9" y="22.3" font-size="2.2" fill="#15151f" textLength="39" lengthAdjust="spacingAndGlyphs">Для переключения каналов используйте клавиши пульта управления</text>
<text x="59.9" y="24.4" font-size="2.2" fill="#15151f" textLength="13" lengthAdjust="spacingAndGlyphs">каналов.</text>
<text x="57.9" y="26.5" font-size="2.2" fill="#15151f" textLength="39" lengthAdjust="spacingAndGlyphs">Для переключения каналов используйте клавиши пульта управления</text>
<text x="57.9" y="29.8" font-size="2.2" fill="#15151f" textLength="44" lengthAdjust="spacingAndGlyphs">Для переключения каналов используйте клавиши пульта управления</text>
<text x="57.9" y="31.6" font-size="2.2" fill="#15151f" textLength="42" lengthAdjust="spacingAndGlyphs">Для переключения каналов используйте клавиши пульта управления</text>
<text x="57.9" y="36.2" font-size="2.3" font-weight="bold" fill="#15151f" textLength="32" lengthAdjust="spacingAndGlyphs">РАБОТА С РАДИОКАНАЛАМИ</text>
<text x="57.9" y="40.2" font-size="2.2" fill="#15151f" textLength="45" lengthAdjust="spacingAndGlyphs">Для переключения каналов используйте клавиши пульта управления</text>
<text x="59.9" y="42.4" font-size="2.2" fill="#15151f" textLength="11" lengthAdjust="spacingAndGlyphs">станций.</text>
<text x="57.9" y="45.4" font-size="2.2" fill="#15151f" textLength="39" lengthAdjust="spacingAndGlyphs">Для переключения каналов используйте клавиши пульта управления</text>
<text x="59.9" y="47.3" font-size="2.2" fill="#15151f" textLength="13" lengthAdjust="spacingAndGlyphs">каналов.</text>
<text x="57.9" y="49.4" font-size="2.2" fill="#15151f" textLength="39" lengthAdjust="spacingAndGlyphs">Для переключения каналов используйте клавиши пульта управления</text>
<text x="57.9" y="51.8" font-size="2.2" fill="#15151f" textLength="44" lengthAdjust="spacingAndGlyphs">Для переключения каналов используйте клавиши пульта управления</text>
<text x="57.9" y="54.4" font-size="2.2" fill="#15151f" textLength="46" lengthAdjust="spacingAndGlyphs">Для переключения каналов используйте клавиши пульта управления</text>
<text x="57.9" y="61.2" font-size="2.3" font-weight="bold" fill="#15151f" textLength="28" lengthAdjust="spacingAndGlyphs">ЦВЕТНЫЕ КЛАВИШИ</text>
<text x="57.9" y="65.2" font-size="2.2" fill="#15151f" textLength="37" lengthAdjust="spacingAndGlyphs">Для переключения каналов используйте клавиши пульта управления</text>
<text x="57.9" y="67.4" font-size="2.2" fill="#15151f" textLength="38" lengthAdjust="spacingAndGlyphs">Для переключения каналов используйте клавиши пульта управления</text>
<text x="57.9" y="69.4" font-size="2.2" fill="#15151f" textLength="40" lengthAdjust="spacingAndGlyphs">Для переключения каналов используйте клавиши пульта управления</text>
<text x="57.9" y="71.4" font-size="2.2" fill="#15151f" textLength="33" lengthAdjust="spacingAndGlyphs">Для переключения каналов используйте клавиши пульта управления</text>
</svg>
</div>

</div>
<div class="a" style="left:32px;top:211px;width:199px;height:1px;background:#bac2c8;"></div>
<!-- pages scrollbar -->
<div class="a trk" style="left:231px;top:211px;width:19px;height:470px;"></div>
<div class="a sb" style="left:231px;top:213px;width:19px;height:18px;"></div>
<div class="a sb" style="left:231px;top:321px;width:19px;height:50px;"></div>
<div class="a sb" style="left:231px;top:662px;width:19px;height:19px;"></div>
<svg style="left:236px;top:219px;" width="10" height="6"><path d="M0 5.5 L9 5.5 L4.5 0.5Z" fill="#000"/></svg>
<svg style="left:236px;top:668px;" width="10" height="6"><path d="M0 0.5 L9 0.5 L4.5 5.5Z" fill="#000"/></svg>
<style>.trk{background-color:#eae8e3;background-image:repeating-conic-gradient(#ffffff 0 25%,#d4d0c8 0 50%);background-size:2px 2px;} .sb{background:#d4d0c8;box-sizing:border-box;border:1px solid;border-color:#fff #404040 #404040 #fff;box-shadow:inset -1px -1px 0 #808080, inset 1px 1px 0 #d4d0c8;}</style>
<style>.th3 g rect[fill="#d1d3d4"]{stroke:#231f20;stroke-width:5px;} .th4 text{stroke:#0c0c14;stroke-width:0.55px;} .th4 text[fill="#fff"]{stroke:none;} .th4 text[fill="#a7a9ac"]{stroke:#a7a9ac;stroke-width:0.2px;} .th3 [stroke="#231f20"]{stroke-width:2.8px;} .th3 [stroke="#8f9194"]{stroke-width:1.5px;stroke:#777;} .th3 circle[fill="#c8c9cb"]{fill:#8a8a8a;} .th3 circle[fill="#c3c5c7"]{fill:#8a8a8a;} .th3 text{stroke:#15151f;stroke-width:1.1px;} .th3 text[fill="#fff"]{stroke:none;} .th3 text[fill="#a7a9ac"]{stroke:#a7a9ac;}</style>
<!-- left column icons -->
<svg style="left:0;top:187px;" width="32" height="494" viewBox="0 187 32 494">
  <path d="M0 257.500 H32 M0 302.500 H32" stroke="#d9d9d9" stroke-width="1"/>
  <!-- bookmarks -->
  <path d="M7.500 223 H19.500 L23.500 227 V244.500 H7.500 Z" fill="#fff" stroke="#777" stroke-width="1"/><path d="M19.500 223 V227 H23.500 Z" fill="#777"/>
  <path d="M7.200 222.600 H15.400 V238.200 L11.300 234.400 L7.200 238.200 Z" fill="#8b4fa6"/>
  <!-- pages (selected) -->
  <path d="M6.700 283 V268.500 H18" fill="none" stroke="#2e6db5" stroke-width="1.400"/>
  <path d="M9.700 286 V271.300 H21" fill="none" stroke="#2e6db5" stroke-width="1.400"/>
  <rect x="12.500" y="273.600" width="11.600" height="15.200" fill="#2e6db5"/>
  <!-- layers -->
  <path d="M10.500 313.800 H26 L19 319.200 H3.500 Z" fill="#fff" stroke="#2e6db5" stroke-width="1.100"/>
  <path d="M10.500 321.300 H26 L19 326.700 H3.500 Z" fill="#2e6db5" stroke="#2e6db5" stroke-width="1.100"/>
  <path d="M10.500 328.800 H26 L19 334.200 H3.500 Z" fill="#fff" stroke="#2e6db5" stroke-width="1.100"/>
  <!-- comments -->
  <path d="M4.200 357.600 H18.400 V368.200 H9 L5.600 371.600 V368.200 H4.200 Z" fill="#e8ae5c"/>
  <path d="M6.600 360.800 H16 M6.600 364 H16" stroke="#f7e3c2" stroke-width="1.300"/>
  <path d="M19.800 366 H26.400 V376.600 H25 V380 L21.600 376.600 H12.400 V369.600 H19.800 Z" fill="#666"/>
  <path d="M14.600 372.800 H24" stroke="#d0d0d0" stroke-width="1.300"/>
  <!-- attachment -->
  <g transform="translate(14.800,413.400) rotate(45)" fill="none" stroke="#2e6db5" stroke-width="1.900"><path d="M4 5 V-8.500 C4 -14 -4 -14 -4 -8.500 V8 C-4 12 1.400 12 1.400 8 V-7"/></g>
  <!-- security lock -->
  <path d="M9.600 456 V453.400 C9.600 445.600 20.400 445.600 20.400 453.400 V456" fill="none" stroke="#e8a642" stroke-width="2.600"/>
  <rect x="5.800" y="455.600" width="18.400" height="14.600" rx="1.500" fill="#e8a642"/>
  <circle cx="15" cy="461.400" r="1.900" fill="#fff"/><rect x="14.100" y="462" width="1.800" height="5" fill="#fff"/>
  <!-- signatures -->
  <g transform="translate(21.600,494) rotate(45)" fill="#2e6db5"><rect x="-2.200" y="0" width="4.400" height="8" rx="1.600"/><rect x="2.800" y="0.500" width="1.200" height="6" /><rect x="-2.200" y="9" width="4.400" height="9"/><path d="M-2.200 18.600 H2.200 L0.700 23 H-0.700 Z"/></g>
  <circle cx="20" cy="506.400" r="3.400" fill="#e8ae5c" stroke="#8b4fa6" stroke-width="1.500"/>
  <path d="M17.600 509.400 L15.600 514.600 L18 513.400 L19.400 515.400 L20 510.400 L20.600 515.400 L22 513.400 L24.400 514.600 L22.400 509.400 Z" fill="#8b4fa6"/>
</svg>
<!-- ===== Document area ===== -->
<div class="a" id="docarea" style="left:254px;top:187px;width:1092px;height:494px;background:#808080;overflow:hidden;">
  <div class="a" style="left:332px;top:0;width:1px;height:494px;background:#3c3c3c;"></div><div class="a" style="left:760px;top:0;width:4px;height:494px;background:#000;"></div>
  <div class="a" id="page" style="left:333px;top:0;width:427px;height:494px;background:#fff;overflow:hidden;">
<svg style="left:0;top:0;" width="427" height="625" viewBox="0 0 427 625" font-family="Liberation Sans, sans-serif">
<rect x="30" y="14.2" width="7.8" height="18.6" fill="#a7a9ac"/>
<rect x="144.3" y="14.2" width="252.6" height="18.6" fill="#a7a9ac"/>
<text x="43.7" y="26.9"  font-size="9.6" font-weight="bold" fill="#a7a9ac" textLength="94.5" lengthAdjust="spacingAndGlyphs">ОБЗОР УСТРОЙСТВА</text>
<text x="383.7" y="26.9"  font-size="8.6" font-weight="bold" fill="#fff">3</text>
<text x="30" y="46.6"  font-size="8.6" font-weight="bold" fill="#111" textLength="176" lengthAdjust="spacingAndGlyphs">ПУЛЬТ ДИСТАНЦИОННОГО УПРАВЛЕНИЯ</text>
<text x="30" y="55.5"  font-size="8.6" font-weight="bold" fill="#111" textLength="25.5" lengthAdjust="spacingAndGlyphs">(ПДУ)</text>
<circle cx="34.29" cy="76.49" r="3.9" fill="#c3c5c7"/>
<text x="34.29" y="79.09"  font-size="7" font-weight="bold" fill="#1d1d28" text-anchor="middle" textLength="3.6" lengthAdjust="spacingAndGlyphs">1</text>
<text x="40.39" y="78.69"  font-size="7.2" font-weight="bold" fill="#1d1d28" stroke="#1d1d28" stroke-width="0.3" textLength="27.8" lengthAdjust="spacingAndGlyphs">Клавиша</text>
<text x="40.39" y="86.82"  font-size="6.7" fill="#1d1d28" stroke="#1d1d28" stroke-width="0.22" textLength="139.4" lengthAdjust="spacingAndGlyphs">Включение рабочего режима/режима ожидания</text>
<circle cx="34.29" cy="93.42" r="3.9" fill="#c3c5c7"/>
<text x="34.29" y="96.02"  font-size="7" font-weight="bold" fill="#1d1d28" text-anchor="middle" textLength="3.6" lengthAdjust="spacingAndGlyphs">2</text>
<text x="40.39" y="95.62"  font-size="7.2" font-weight="bold" fill="#1d1d28" stroke="#1d1d28" stroke-width="0.3" textLength="44.7" lengthAdjust="spacingAndGlyphs">Клавиша INFO</text>
<text x="40.39" y="104.08"  font-size="6.7" fill="#1d1d28" stroke="#1d1d28" stroke-width="0.22" textLength="148.2" lengthAdjust="spacingAndGlyphs">Просмотр информации о текущем канале/ресивере</text>
<circle cx="34.29" cy="110.0" r="3.9" fill="#c3c5c7"/>
<text x="34.29" y="112.6"  font-size="7" font-weight="bold" fill="#1d1d28" text-anchor="middle" textLength="3.6" lengthAdjust="spacingAndGlyphs">3</text>
<text x="40.39" y="112.2"  font-size="7.2" font-weight="bold" fill="#1d1d28" stroke="#1d1d28" stroke-width="0.3" textLength="42.3" lengthAdjust="spacingAndGlyphs">Клавиша EPG</text>
<text x="40.39" y="121.0"  font-size="6.7" fill="#1d1d28" stroke="#1d1d28" stroke-width="0.22" textLength="150.6" lengthAdjust="spacingAndGlyphs">Переход к меню интерактивной программы передач</text>
<circle cx="34.29" cy="126.93" r="3.9" fill="#c3c5c7"/>
<text x="34.29" y="129.53"  font-size="7" font-weight="bold" fill="#1d1d28" text-anchor="middle" textLength="3.6" lengthAdjust="spacingAndGlyphs">4</text>
<text x="40.39" y="129.13"  font-size="7.2" font-weight="bold" fill="#1d1d28" stroke="#1d1d28" stroke-width="0.3" textLength="49.4" lengthAdjust="spacingAndGlyphs">Клавиша AUDIO</text>
<text x="40.39" y="137.93"  font-size="6.7" fill="#1d1d28" stroke="#1d1d28" stroke-width="0.22" textLength="167.9" lengthAdjust="spacingAndGlyphs">Переключение аудиорежима или доступной аудиодорожки</text>
<circle cx="34.29" cy="143.85" r="3.9" fill="#c3c5c7"/>
<text x="34.29" y="146.45"  font-size="7" font-weight="bold" fill="#1d1d28" text-anchor="middle" textLength="3.6" lengthAdjust="spacingAndGlyphs">5</text>
<text x="40.39" y="146.05"  font-size="7.2" font-weight="bold" fill="#1d1d28" stroke="#1d1d28" stroke-width="0.3" textLength="48.7" lengthAdjust="spacingAndGlyphs">Клавиша MENU</text>
<text x="40.39" y="154.85"  font-size="6.7" fill="#1d1d28" stroke="#1d1d28" stroke-width="0.22" textLength="78.5" lengthAdjust="spacingAndGlyphs">Открытие и закрытие меню</text>
<circle cx="34.29" cy="160.77" r="3.9" fill="#c3c5c7"/>
<text x="34.29" y="163.37"  font-size="7" font-weight="bold" fill="#1d1d28" text-anchor="middle" textLength="3.6" lengthAdjust="spacingAndGlyphs">6</text>
<text x="40.39" y="162.97"  font-size="7.2" font-weight="bold" fill="#1d1d28" stroke="#1d1d28" stroke-width="0.3" textLength="74.5" lengthAdjust="spacingAndGlyphs">Клавиши направления (</text>
<text x="40.39" y="171.77"  font-size="6.7" fill="#1d1d28" stroke="#1d1d28" stroke-width="0.22" textLength="137.1" lengthAdjust="spacingAndGlyphs">ВВЕРХ/ВНИЗ – перемещение по пунктам меню/</text>
<text x="40.39" y="180.23"  font-size="6.7" fill="#1d1d28" stroke="#1d1d28" stroke-width="0.22" textLength="66.7" lengthAdjust="spacingAndGlyphs">переключение каналов</text>
<text x="40.39" y="189.03"  font-size="6.7" fill="#1d1d28" stroke="#1d1d28" stroke-width="0.22" textLength="146.6" lengthAdjust="spacingAndGlyphs">ВПРАВО/ВЛЕВО – увеличение/уменьшение уровня</text>
<text x="40.39" y="197.16"  font-size="6.7" fill="#1d1d28" stroke="#1d1d28" stroke-width="0.22" textLength="31.5" lengthAdjust="spacingAndGlyphs">громкости.</text>
<circle cx="34.29" cy="203.42" r="3.9" fill="#c3c5c7"/>
<text x="34.29" y="206.02"  font-size="7" font-weight="bold" fill="#1d1d28" text-anchor="middle" textLength="3.6" lengthAdjust="spacingAndGlyphs">7</text>
<text x="40.39" y="205.62"  font-size="7.2" font-weight="bold" fill="#1d1d28" stroke="#1d1d28" stroke-width="0.3" textLength="60.2" lengthAdjust="spacingAndGlyphs">Клавиша FAVORITE</text>
<text x="40.39" y="214.08"  font-size="6.7" fill="#1d1d28" stroke="#1d1d28" stroke-width="0.22" textLength="125.2" lengthAdjust="spacingAndGlyphs">Включение/установка избранных программ</text>
<circle cx="34.29" cy="220.68" r="3.9" fill="#c3c5c7"/>
<text x="34.29" y="223.28"  font-size="7" font-weight="bold" fill="#1d1d28" text-anchor="middle" textLength="3.6" lengthAdjust="spacingAndGlyphs">8</text>
<text x="40.39" y="222.88"  font-size="7.2" font-weight="bold" fill="#1d1d28" stroke="#1d1d28" stroke-width="0.3" textLength="61.6" lengthAdjust="spacingAndGlyphs">Цифровые клавиши</text>
<circle cx="34.29" cy="228.8" r="3.9" fill="#c3c5c7"/>
<text x="34.29" y="231.4"  font-size="7" font-weight="bold" fill="#1d1d28" text-anchor="middle" textLength="3.6" lengthAdjust="spacingAndGlyphs">9</text>
<text x="40.39" y="231.0"  font-size="7.2" font-weight="bold" fill="#1d1d28" stroke="#1d1d28" stroke-width="0.3" textLength="27.8" lengthAdjust="spacingAndGlyphs">Клавиши</text>
<text x="40.39" y="239.8"  font-size="6.7" fill="#1d1d28" stroke="#1d1d28" stroke-width="0.22" textLength="123.5" lengthAdjust="spacingAndGlyphs">Ускоренное воспроизведение назад/вперед</text>
<circle cx="34.29" cy="245.73" r="3.9" fill="#c3c5c7"/>
<text x="34.29" y="248.33"  font-size="7" font-weight="bold" fill="#1d1d28" text-anchor="middle" textLength="7.4" lengthAdjust="spacingAndGlyphs">10</text>
<text x="40.39" y="247.93"  font-size="7.2" font-weight="bold" fill="#1d1d28" stroke="#1d1d28" stroke-width="0.3" textLength="50.8" lengthAdjust="spacingAndGlyphs">Клавиша PAUSE</text>
<circle cx="34.29" cy="254.05" r="3.9" fill="#c3c5c7"/>
<text x="34.29" y="256.65"  font-size="7" font-weight="bold" fill="#1d1d28" text-anchor="middle" textLength="7.4" lengthAdjust="spacingAndGlyphs">11</text>
<text x="40.39" y="256.25"  font-size="7.2" font-weight="bold" fill="#1d1d28" stroke="#1d1d28" stroke-width="0.3" textLength="45.7" lengthAdjust="spacingAndGlyphs">Клавиша PLAY</text>
<circle cx="34.29" cy="262.51" r="3.9" fill="#c3c5c7"/>
<text x="34.29" y="265.11"  font-size="7" font-weight="bold" fill="#1d1d28" text-anchor="middle" textLength="7.4" lengthAdjust="spacingAndGlyphs">12</text>
<text x="40.39" y="264.71"  font-size="7.2" font-weight="bold" fill="#1d1d28" stroke="#1d1d28" stroke-width="0.3" textLength="55.8" lengthAdjust="spacingAndGlyphs">Цветные клавиши</text>
<text x="40.39" y="273.85"  font-size="6.7" fill="#1d1d28" stroke="#1d1d28" stroke-width="0.22" textLength="146.6" lengthAdjust="spacingAndGlyphs">Действуют в соответствии с информацией на экране</text>
<circle cx="34.29" cy="279.44" r="3.9" fill="#c3c5c7"/>
<text x="34.29" y="282.04"  font-size="7" font-weight="bold" fill="#1d1d28" text-anchor="middle" textLength="7.4" lengthAdjust="spacingAndGlyphs">13</text>
<text x="40.39" y="281.64"  font-size="7.2" font-weight="bold" fill="#1d1d28" stroke="#1d1d28" stroke-width="0.3" textLength="53.5" lengthAdjust="spacingAndGlyphs">Клавиша REPEAT</text>
<text x="40.39" y="290.78"  font-size="6.7" fill="#1d1d28" stroke="#1d1d28" stroke-width="0.22" textLength="114.4" lengthAdjust="spacingAndGlyphs">Включение/выключение режима повтора</text>
<circle cx="34.29" cy="296.7" r="3.9" fill="#c3c5c7"/>
<text x="34.29" y="299.3"  font-size="7" font-weight="bold" fill="#1d1d28" text-anchor="middle" textLength="7.4" lengthAdjust="spacingAndGlyphs">14</text>
<text x="40.39" y="298.9"  font-size="7.2" font-weight="bold" fill="#1d1d28" stroke="#1d1d28" stroke-width="0.3" textLength="45.7" lengthAdjust="spacingAndGlyphs">Клавиша STOP</text>
<text x="40.39" y="307.7"  font-size="6.7" fill="#1d1d28" stroke="#1d1d28" stroke-width="0.22" textLength="129.3" lengthAdjust="spacingAndGlyphs">Остановка просмотра или записи программы</text>
<circle cx="34.29" cy="313.96" r="3.9" fill="#c3c5c7"/>
<text x="34.29" y="316.56"  font-size="7" font-weight="bold" fill="#1d1d28" text-anchor="middle" textLength="7.4" lengthAdjust="spacingAndGlyphs">15</text>
<text x="40.39" y="316.16"  font-size="7.2" font-weight="bold" fill="#1d1d28" stroke="#1d1d28" stroke-width="0.3" textLength="27.8" lengthAdjust="spacingAndGlyphs">Клавиши</text>
<text x="40.39" y="324.96"  font-size="6.7" fill="#1d1d28" stroke="#1d1d28" stroke-width="0.22" textLength="152.3" lengthAdjust="spacingAndGlyphs">Воспроизведение предыдущего/следующего файла/</text>
<text x="40.39" y="333.09"  font-size="6.7" fill="#1d1d28" stroke="#1d1d28" stroke-width="0.22" textLength="116.1" lengthAdjust="spacingAndGlyphs">переход на заданный интервал времени</text>
<circle cx="34.29" cy="339.35" r="3.9" fill="#c3c5c7"/>
<text x="34.29" y="341.95"  font-size="7" font-weight="bold" fill="#1d1d28" text-anchor="middle" textLength="7.4" lengthAdjust="spacingAndGlyphs">16</text>
<text x="40.39" y="341.55"  font-size="7.2" font-weight="bold" fill="#1d1d28" stroke="#1d1d28" stroke-width="0.3" textLength="46.4" lengthAdjust="spacingAndGlyphs">Клавиша GOTO</text>
<text x="40.39" y="350.01"  font-size="6.7" fill="#1d1d28" stroke="#1d1d28" stroke-width="0.22" textLength="143.2" lengthAdjust="spacingAndGlyphs">Переход на заданный интервал воспроизведения</text>
<circle cx="34.29" cy="356.27" r="3.9" fill="#c3c5c7"/>
<text x="34.29" y="358.87"  font-size="7" font-weight="bold" fill="#1d1d28" text-anchor="middle" textLength="7.4" lengthAdjust="spacingAndGlyphs">17</text>
<text x="40.39" y="358.47"  font-size="7.2" font-weight="bold" fill="#1d1d28" stroke="#1d1d28" stroke-width="0.3" textLength="54.2" lengthAdjust="spacingAndGlyphs">Клавиша RECALL</text>
<text x="40.39" y="366.93"  font-size="6.7" fill="#1d1d28" stroke="#1d1d28" stroke-width="0.22" textLength="161.8" lengthAdjust="spacingAndGlyphs">Переключение на предыдущий просматриваемый канал</text>
<circle cx="34.29" cy="373.19" r="3.9" fill="#c3c5c7"/>
<text x="34.29" y="375.79"  font-size="7" font-weight="bold" fill="#1d1d28" text-anchor="middle" textLength="7.4" lengthAdjust="spacingAndGlyphs">18</text>
<text x="40.39" y="375.39"  font-size="7.2" font-weight="bold" fill="#1d1d28" stroke="#1d1d28" stroke-width="0.3" textLength="59.6" lengthAdjust="spacingAndGlyphs">Клавиша TV/RADIO</text>
<text x="40.39" y="383.86"  font-size="6.7" fill="#1d1d28" stroke="#1d1d28" stroke-width="0.22" textLength="94.1" lengthAdjust="spacingAndGlyphs">Переключение между ТВ и радио</text>
<circle cx="34.29" cy="390.46" r="3.9" fill="#c3c5c7"/>
<text x="34.29" y="393.06"  font-size="7" font-weight="bold" fill="#1d1d28" text-anchor="middle" textLength="7.4" lengthAdjust="spacingAndGlyphs">19</text>
<text x="40.39" y="392.66"  font-size="7.2" font-weight="bold" fill="#1d1d28" stroke="#1d1d28" stroke-width="0.3" textLength="38.9" lengthAdjust="spacingAndGlyphs">Клавиша OK</text>
<text x="40.39" y="401.12"  font-size="6.7" fill="#1d1d28" stroke="#1d1d28" stroke-width="0.22" textLength="46.7" lengthAdjust="spacingAndGlyphs">Подтверждение</text>
<circle cx="34.29" cy="407.38" r="3.9" fill="#c3c5c7"/>
<text x="34.29" y="409.98"  font-size="7" font-weight="bold" fill="#1d1d28" text-anchor="middle" textLength="7.4" lengthAdjust="spacingAndGlyphs">20</text>
<text x="40.39" y="409.58"  font-size="7.2" font-weight="bold" fill="#1d1d28" stroke="#1d1d28" stroke-width="0.3" textLength="43.3" lengthAdjust="spacingAndGlyphs">Клавиша EXIT</text>
<text x="40.39" y="418.04"  font-size="6.7" fill="#1d1d28" stroke="#1d1d28" stroke-width="0.22" textLength="43.3" lengthAdjust="spacingAndGlyphs">Выход из меню</text>
<circle cx="34.29" cy="424.3" r="3.9" fill="#c3c5c7"/>
<text x="34.29" y="426.9"  font-size="7" font-weight="bold" fill="#1d1d28" text-anchor="middle" textLength="7.4" lengthAdjust="spacingAndGlyphs">21</text>
<text x="40.39" y="426.5"  font-size="7.2" font-weight="bold" fill="#1d1d28" stroke="#1d1d28" stroke-width="0.3" textLength="59.9" lengthAdjust="spacingAndGlyphs">Клавиша SUBTITLE</text>
<text x="40.39" y="434.96"  font-size="6.7" fill="#1d1d28" stroke="#1d1d28" stroke-width="0.22" textLength="98.8" lengthAdjust="spacingAndGlyphs">Включение/отключение субтитров</text>
<circle cx="34.29" cy="441.23" r="3.9" fill="#c3c5c7"/>
<text x="34.29" y="443.83"  font-size="7" font-weight="bold" fill="#1d1d28" text-anchor="middle" textLength="7.4" lengthAdjust="spacingAndGlyphs">22</text>
<text x="40.39" y="443.43"  font-size="7.2" font-weight="bold" fill="#1d1d28" stroke="#1d1d28" stroke-width="0.3" textLength="42.3" lengthAdjust="spacingAndGlyphs">Клавиша PVR</text>
<text x="40.39" y="451.89"  font-size="6.7" fill="#1d1d28" stroke="#1d1d28" stroke-width="0.22" textLength="66.7" lengthAdjust="spacingAndGlyphs">Запись телепрограммы</text>
<circle cx="34.29" cy="458.15" r="3.9" fill="#c3c5c7"/>
<text x="34.29" y="460.75"  font-size="7" font-weight="bold" fill="#1d1d28" text-anchor="middle" textLength="7.4" lengthAdjust="spacingAndGlyphs">23</text>
<text x="40.39" y="460.35"  font-size="7.2" font-weight="bold" fill="#1d1d28" stroke="#1d1d28" stroke-width="0.3" textLength="41.3" lengthAdjust="spacingAndGlyphs">Клавиша TTX</text>
<text x="40.39" y="468.81"  font-size="6.7" fill="#1d1d28" stroke="#1d1d28" stroke-width="0.22" textLength="65.0" lengthAdjust="spacingAndGlyphs">Включение телетекста</text>
<circle cx="34.29" cy="475.41" r="3.9" fill="#c3c5c7"/>
<text x="34.29" y="478.01"  font-size="7" font-weight="bold" fill="#1d1d28" text-anchor="middle" textLength="7.4" lengthAdjust="spacingAndGlyphs">24</text>
<text x="40.39" y="477.61"  font-size="7.2" font-weight="bold" fill="#1d1d28" stroke="#1d1d28" stroke-width="0.3" textLength="47.4" lengthAdjust="spacingAndGlyphs">Клавиша MUTE</text>
<text x="40.39" y="486.07"  font-size="6.7" fill="#1d1d28" stroke="#1d1d28" stroke-width="0.22" textLength="87.0" lengthAdjust="spacingAndGlyphs">Выключение/включение звука</text>
<path d="M71.97,73.72 A3.9 3.9 0 1 0 77.16999999999999,73.72" fill="none" stroke="#1d1d28" stroke-width="1.1"/><path d="M74.57,71.72 V75.91999999999999" stroke="#1d1d28" stroke-width="1.1"/>
<path d="M115.61,163.01 L122.21,163.01 L118.91,157.07Z" fill="#1d1d28"/>
<path d="M126.10000000000001,157.73000000000002 L132.70000000000002,157.73000000000002 L129.4,163.67000000000002Z" fill="#1d1d28"/>
<path d="M141.85999999999999,157.07 L141.85999999999999,163.67000000000002 L135.92,160.37Z" fill="#1d1d28"/>
<path d="M148.09,157.07 L148.09,163.67000000000002 L154.03,160.37Z" fill="#1d1d28"/>
<text x="122.63" y="162.97"  font-size="7" font-weight="bold" fill="#1d1d28">/</text>
<text x="133.13" y="162.97"  font-size="7" font-weight="bold" fill="#1d1d28">/</text>
<text x="143.62" y="162.97"  font-size="7" font-weight="bold" fill="#1d1d28">/</text>
<text x="154.11" y="162.97"  font-size="7" font-weight="bold" fill="#1d1d28">)</text>
<path d="M73.2,226.5 L73.2,230.7 L69.42,228.6Z" fill="#1d1d28"/>
<path d="M76.93,226.5 L76.93,230.7 L73.15,228.6Z" fill="#1d1d28"/>
<path d="M83.03999999999999,226.5 L83.03999999999999,230.7 L86.82,228.6Z" fill="#1d1d28"/>
<path d="M86.77,226.5 L86.77,230.7 L90.55,228.6Z" fill="#1d1d28"/>
<text x="78.29" y="231.0"  font-size="7" font-weight="bold" fill="#1d1d28">/</text>
<rect x="93.19" y="241.63" width="1.7" height="7.6" fill="#1d1d28"/><rect x="96.91" y="241.63" width="1.7" height="7.6" fill="#1d1d28"/>
<path d="M88.17999999999999,250.14999999999998 L88.17999999999999,256.75 L94.11999999999999,253.45Z" fill="#1d1d28"/>
<rect x="89.12" y="294.2" width="4.6" height="4.6" fill="#1d1d28"/>
<rect x="71.19" y="311.36" width="1.1" height="4.8" fill="#1d1d28"/>
<path d="M76.25,311.66 L76.25,315.86000000000007 L72.47,313.76000000000005Z" fill="#1d1d28"/>
<path d="M79.97000000000001,311.66 L79.97000000000001,315.86000000000007 L76.19000000000001,313.76000000000005Z" fill="#1d1d28"/>
<text x="81.34" y="316.16"  font-size="7" font-weight="bold" fill="#1d1d28">/</text>
<path d="M85.08,311.66 L85.08,315.86000000000007 L88.86,313.76000000000005Z" fill="#1d1d28"/>
<path d="M88.8,311.66 L88.8,315.86000000000007 L92.58,313.76000000000005Z" fill="#1d1d28"/>
<rect x="92.51" y="311.36" width="1.1" height="4.8" fill="#1d1d28"/>
<path d="M90.48,473.01 h2.4 l3.2,-2.6 v9 l-3.2,-2.6 h-2.4z" fill="none" stroke="#1d1d28" stroke-width="1"/><path d="M89.88000000000001,470.21000000000004 L97.88000000000001,479.21000000000004 M97.88000000000001,470.21000000000004 L89.88000000000001,479.21000000000004" stroke="#1d1d28" stroke-width="1"/>
<path d="M238.31,64.56 Q238.31,57.06 245.03,54.09 Q275.5,46.59 306.12,46.59 Q336.75,46.59 367.22,54.09 Q373.94,57.06 373.94,64.56 V490 Q373.94,498 365.94,498 H246.31 Q238.31,498 238.31,490 Z" fill="#231f20"/>
<path d="M245.34,69.25 Q245.34,63.0 251.28,60.66 Q278.62,53.62 306.12,53.62 Q333.62,53.62 360.97,60.66 Q366.91,63.0 366.91,69.25 V465.28 Q366.91,471.28 360.91,471.28 H251.34 Q245.34,471.28 245.34,465.28 Z" fill="#fbfbfb" stroke="#58595b" stroke-width="0.6"/>
<text x="263.94" y="72.09"  font-size="5.2" font-weight="bold" fill="#1d1d28" text-anchor="middle" textLength="23.8" lengthAdjust="spacingAndGlyphs">STANDBY</text>
<circle cx="264.25" cy="85.66" r="10.6" fill="#ed1c24" stroke="#9e0b0f" stroke-width="0.9"/>
<path d="M260.35,82.06 A5.6 5.6 0 1 0 268.15,82.06" fill="none" stroke="#fff" stroke-width="1.9" stroke-linecap="round"/><path d="M264.25,79.06 V85.06" stroke="#fff" stroke-width="1.9" stroke-linecap="round"/>
<text x="345.03" y="72.09"  font-size="5.2" font-weight="bold" fill="#1d1d28" text-anchor="middle" textLength="14" lengthAdjust="spacingAndGlyphs">MUTE</text>
<circle cx="345.5" cy="85.66" r="10.6" fill="#d1d3d4" stroke="#231f20" stroke-width="0.9"/>
<path d="M340.5,83.25999999999999 h3 l4.4,-3.8 v12.4 l-4.4,-3.8 h-3z" fill="none" stroke="#fff" stroke-width="1"/><path d="M339.9,79.25999999999999 L350.5,92.06 M350.5,79.25999999999999 L339.9,92.06" stroke="#fff" stroke-width="1"/>
<text x="265.81" y="108.03"  font-size="5.2" font-weight="bold" fill="#1d1d28" text-anchor="middle" textLength="10" lengthAdjust="spacingAndGlyphs">EPG</text>
<rect x="253.16" y="109.09" width="25.15" height="22.66" rx="3.2" fill="#d1d3d4" stroke="#231f20" stroke-width="0.9"/>
<text x="304.88" y="108.03"  font-size="5.2" font-weight="bold" fill="#1d1d28" text-anchor="middle" textLength="12" lengthAdjust="spacingAndGlyphs">INFO</text>
<rect x="292.22" y="109.09" width="25.0" height="16.41" rx="3.2" fill="#d1d3d4" stroke="#231f20" stroke-width="0.9"/>
<text x="343.94" y="108.03"  font-size="5.2" font-weight="bold" fill="#1d1d28" text-anchor="middle" textLength="9.5" lengthAdjust="spacingAndGlyphs">TTX</text>
<rect x="331.28" y="109.09" width="24.69" height="22.66" rx="3.2" fill="#d1d3d4" stroke="#231f20" stroke-width="0.9"/>
<rect x="253.16" y="137.53" width="25.15" height="22.03" rx="3.2" fill="#d1d3d4" stroke="#231f20" stroke-width="0.9"/>
<text x="265.81" y="165.22"  font-size="5.2" font-weight="bold" fill="#1d1d28" text-anchor="middle" textLength="16" lengthAdjust="spacingAndGlyphs">AUDIO</text>
<text x="304.88" y="141.31"  font-size="5.2" font-weight="bold" fill="#1d1d28" text-anchor="middle" textLength="10" lengthAdjust="spacingAndGlyphs">PVR</text>
<rect x="292.22" y="143.0" width="25.0" height="16.56" rx="3.2" fill="#d1d3d4" stroke="#231f20" stroke-width="0.9"/>
<rect x="331.28" y="137.53" width="24.69" height="22.03" rx="3.2" fill="#d1d3d4" stroke="#231f20" stroke-width="0.9"/>
<text x="343.47" y="165.22"  font-size="5.2" font-weight="bold" fill="#1d1d28" text-anchor="middle" textLength="25" lengthAdjust="spacingAndGlyphs">SUBTITLE</text>
<text x="304.88" y="170.22"  font-size="5.2" font-weight="bold" fill="#1d1d28" text-anchor="middle" textLength="9.5" lengthAdjust="spacingAndGlyphs">CH+</text>
<circle cx="263.0" cy="181.12" r="9.6" fill="#d1d3d4" stroke="#231f20" stroke-width="0.9"/>
<text x="263.0" y="198.03"  font-size="5.2" font-weight="bold" fill="#1d1d28" text-anchor="middle" textLength="15" lengthAdjust="spacingAndGlyphs">MENU</text>
<circle cx="346.12" cy="181.12" r="9.6" fill="#d1d3d4" stroke="#231f20" stroke-width="0.9"/>
<text x="345.81" y="198.03"  font-size="5.2" font-weight="bold" fill="#1d1d28" text-anchor="middle" textLength="11.5" lengthAdjust="spacingAndGlyphs">EXIT</text>
<g transform="translate(305.19,218.94) rotate(45)"><rect x="-34.6" y="-34.6" width="69.2" height="69.2" rx="5" fill="#231f20"/><rect x="-30.9" y="-30.9" width="27.3" height="27.3" rx="3" fill="#d1d3d4"/><rect x="3.6" y="-30.9" width="27.3" height="27.3" rx="3" fill="#d1d3d4"/><rect x="-30.9" y="3.6" width="27.3" height="27.3" rx="3" fill="#d1d3d4"/><rect x="3.6" y="3.6" width="27.3" height="27.3" rx="3" fill="#d1d3d4"/><circle r="22.8" fill="#231f20"/><circle r="13.8" fill="#d1d3d4"/></g>
<path d="M300.29,190.35999999999999 L310.09,190.35999999999999 L305.19,181.54Z" fill="#fff"/>
<path d="M300.29,249.02 L310.09,249.02 L305.19,257.84Z" fill="#fff"/>
<path d="M276.61,214.04 L276.61,223.84 L267.79,218.94Z" fill="#fff"/>
<path d="M334.77,214.04 L334.77,223.84 L343.59,218.94Z" fill="#fff"/>
<text x="305.19" y="223.14"  font-size="11.5" font-weight="bold" fill="#fff" text-anchor="middle" textLength="15.5" lengthAdjust="spacingAndGlyphs">OK</text>
<text x="257.22" y="219.91"  font-size="5.2" font-weight="bold" fill="#1d1d28" text-anchor="end" textLength="11.5" lengthAdjust="spacingAndGlyphs">VOL-</text>
<text x="353.94" y="219.91"  font-size="5.2" font-weight="bold" fill="#1d1d28" text-anchor="start" textLength="12.5" lengthAdjust="spacingAndGlyphs">VOL+</text>
<circle cx="263.0" cy="257.38" r="9.6" fill="#d1d3d4" stroke="#231f20" stroke-width="0.9"/>
<text x="263.0" y="273.19"  font-size="5.2" font-weight="bold" fill="#1d1d28" text-anchor="middle" textLength="24" lengthAdjust="spacingAndGlyphs">FAVORITE</text>
<text x="305.19" y="273.19"  font-size="5.2" font-weight="bold" fill="#1d1d28" text-anchor="middle" textLength="8.5" lengthAdjust="spacingAndGlyphs">CH-</text>
<circle cx="346.12" cy="257.38" r="9.6" fill="#d1d3d4" stroke="#231f20" stroke-width="0.9"/>
<text x="347.38" y="273.19"  font-size="5.2" font-weight="bold" fill="#1d1d28" text-anchor="middle" textLength="23.5" lengthAdjust="spacingAndGlyphs">TV/RADIO</text>
<path d="M251.28,276.59 H329.41 Q333.0,276.59 333.0,280.19 V327.06 Q333.0,332.84 338.78,332.84 H359.09 Q362.69,332.84 362.69,336.44 V355.5 Q362.69,358.94 359.09,358.94 H251.28 Q247.69,358.94 247.69,355.5 V280.19 Q247.69,276.59 251.28,276.59Z" fill="none" stroke="#231f20" stroke-width="0.8"/>
<circle cx="263.0" cy="288.62" r="9.6" fill="#d1d3d4" stroke="#231f20" stroke-width="0.9"/>
<text x="263.0" y="292.52"  font-size="11.4" font-weight="bold" fill="#fff" text-anchor="middle" textLength="6" lengthAdjust="spacingAndGlyphs">1</text>
<circle cx="290.81" cy="288.62" r="9.6" fill="#d1d3d4" stroke="#231f20" stroke-width="0.9"/>
<text x="290.81" y="292.52"  font-size="11.4" font-weight="bold" fill="#fff" text-anchor="middle" textLength="6" lengthAdjust="spacingAndGlyphs">2</text>
<circle cx="318.94" cy="288.62" r="9.6" fill="#d1d3d4" stroke="#231f20" stroke-width="0.9"/>
<text x="318.94" y="292.52"  font-size="11.4" font-weight="bold" fill="#fff" text-anchor="middle" textLength="6" lengthAdjust="spacingAndGlyphs">3</text>
<circle cx="263.0" cy="316.91" r="9.6" fill="#d1d3d4" stroke="#231f20" stroke-width="0.9"/>
<text x="263.0" y="320.81"  font-size="11.4" font-weight="bold" fill="#fff" text-anchor="middle" textLength="6" lengthAdjust="spacingAndGlyphs">4</text>
<circle cx="290.81" cy="316.91" r="9.6" fill="#d1d3d4" stroke="#231f20" stroke-width="0.9"/>
<text x="290.81" y="320.81"  font-size="11.4" font-weight="bold" fill="#fff" text-anchor="middle" textLength="6" lengthAdjust="spacingAndGlyphs">5</text>
<circle cx="318.94" cy="316.91" r="9.6" fill="#d1d3d4" stroke="#231f20" stroke-width="0.9"/>
<text x="318.94" y="320.81"  font-size="11.4" font-weight="bold" fill="#fff" text-anchor="middle" textLength="6" lengthAdjust="spacingAndGlyphs">6</text>
<circle cx="263.0" cy="345.66" r="9.6" fill="#d1d3d4" stroke="#231f20" stroke-width="0.9"/>
<text x="263.0" y="349.56"  font-size="11.4" font-weight="bold" fill="#fff" text-anchor="middle" textLength="6" lengthAdjust="spacingAndGlyphs">7</text>
<circle cx="290.81" cy="345.66" r="9.6" fill="#d1d3d4" stroke="#231f20" stroke-width="0.9"/>
<text x="290.81" y="349.56"  font-size="11.4" font-weight="bold" fill="#fff" text-anchor="middle" textLength="6" lengthAdjust="spacingAndGlyphs">8</text>
<circle cx="318.94" cy="345.66" r="9.6" fill="#d1d3d4" stroke="#231f20" stroke-width="0.9"/>
<text x="318.94" y="349.56"  font-size="11.4" font-weight="bold" fill="#fff" text-anchor="middle" textLength="6" lengthAdjust="spacingAndGlyphs">9</text>
<circle cx="347.06" cy="345.66" r="9.6" fill="#d1d3d4" stroke="#231f20" stroke-width="0.9"/>
<text x="347.06" y="349.56"  font-size="11.4" font-weight="bold" fill="#fff" text-anchor="middle" textLength="6" lengthAdjust="spacingAndGlyphs">0</text>
<circle cx="347.06" cy="288.62" r="9.6" fill="#d1d3d4" stroke="#231f20" stroke-width="0.9"/>
<text x="347.06" y="303.97"  font-size="5.2" font-weight="bold" fill="#1d1d28" text-anchor="middle" textLength="19" lengthAdjust="spacingAndGlyphs">RECALL</text>
<circle cx="347.06" cy="316.91" r="9.6" fill="#d1d3d4" stroke="#231f20" stroke-width="0.9"/>
<text x="347.06" y="332.25"  font-size="5.2" font-weight="bold" fill="#1d1d28" text-anchor="middle" textLength="13" lengthAdjust="spacingAndGlyphs">GOTO</text>
<rect x="253.16" y="364.56" width="19.68" height="11.72" rx="3" fill="#d1d3d4" stroke="#231f20" stroke-width="0.9"/>
<rect x="253.16" y="387.38" width="19.68" height="11.71" rx="3" fill="#d1d3d4" stroke="#231f20" stroke-width="0.9"/>
<rect x="281.44" y="364.56" width="19.68" height="11.72" rx="3" fill="#d1d3d4" stroke="#231f20" stroke-width="0.9"/>
<rect x="281.44" y="387.38" width="19.68" height="11.71" rx="3" fill="#d1d3d4" stroke="#231f20" stroke-width="0.9"/>
<rect x="309.41" y="364.56" width="19.68" height="11.72" rx="3" fill="#d1d3d4" stroke="#231f20" stroke-width="0.9"/>
<rect x="309.41" y="387.38" width="19.68" height="11.71" rx="3" fill="#d1d3d4" stroke="#231f20" stroke-width="0.9"/>
<rect x="337.69" y="364.56" width="19.69" height="11.72" rx="3" fill="#d1d3d4" stroke="#231f20" stroke-width="0.9"/>
<rect x="337.69" y="387.38" width="19.69" height="11.71" rx="3" fill="#d1d3d4" stroke="#231f20" stroke-width="0.9"/>
<text x="263.0" y="382.88"  font-size="5.2" font-weight="bold" fill="#1d1d28" text-anchor="middle" textLength="9.5" lengthAdjust="spacingAndGlyphs">REV</text>
<text x="291.28" y="382.88"  font-size="5.2" font-weight="bold" fill="#1d1d28" text-anchor="middle" textLength="10.5" lengthAdjust="spacingAndGlyphs">FWD</text>
<text x="319.25" y="382.88"  font-size="5.2" font-weight="bold" fill="#1d1d28" text-anchor="middle" textLength="12.5" lengthAdjust="spacingAndGlyphs">PREV</text>
<text x="347.53" y="382.88"  font-size="5.2" font-weight="bold" fill="#1d1d28" text-anchor="middle" textLength="12.5" lengthAdjust="spacingAndGlyphs">NEXT</text>
<text x="263.0" y="405.84"  font-size="5.2" font-weight="bold" fill="#1d1d28" text-anchor="middle" textLength="11.5" lengthAdjust="spacingAndGlyphs">PLAY</text>
<text x="291.28" y="405.84"  font-size="5.2" font-weight="bold" fill="#1d1d28" text-anchor="middle" textLength="16" lengthAdjust="spacingAndGlyphs">PAUSE</text>
<text x="319.25" y="405.84"  font-size="5.2" font-weight="bold" fill="#1d1d28" text-anchor="middle" textLength="12.5" lengthAdjust="spacingAndGlyphs">STOP</text>
<text x="347.53" y="405.84"  font-size="5.2" font-weight="bold" fill="#1d1d28" text-anchor="middle" textLength="19" lengthAdjust="spacingAndGlyphs">REPEAT</text>
<path d="M262.64,368.2 L262.64,372.8 L258.5,370.5Z" fill="#fff"/>
<path d="M267.03999999999996,368.2 L267.03999999999996,372.8 L262.9,370.5Z" fill="#fff"/>
<path d="M287.24,368.2 L287.24,372.8 L291.38,370.5Z" fill="#fff"/>
<path d="M291.64000000000004,368.2 L291.64000000000004,372.8 L295.78000000000003,370.5Z" fill="#fff"/>
<rect x="314.05" y="368.2" width="1.2" height="4.6" fill="#fff"/>
<path d="M319.69,368.2 L319.69,372.8 L315.55,370.5Z" fill="#fff"/>
<path d="M323.89,368.2 L323.89,372.8 L319.75,370.5Z" fill="#fff"/>
<path d="M342.89000000000004,368.2 L342.89000000000004,372.8 L347.03000000000003,370.5Z" fill="#fff"/>
<path d="M347.09000000000003,368.2 L347.09000000000003,372.8 L351.23,370.5Z" fill="#fff"/>
<rect x="351.53" y="368.2" width="1.2" height="4.6" fill="#fff"/>
<path d="M261.07,390.51 L261.07,396.11 L266.11,393.31Z" fill="#fff"/>
<rect x="257.4" y="392.81" width="4" height="1" fill="#fff"/>
<rect x="288.47999999999996" y="390.51" width="1.8" height="5.6" fill="#fff"/><rect x="292.28" y="390.51" width="1.8" height="5.6" fill="#fff"/>
<rect x="316.65" y="390.71" width="5.2" height="5.2" fill="#fff"/>
<rect x="250.97" y="406.59" width="108.59" height="17.5" fill="none" stroke="#6d6e70" stroke-width="0.9" stroke-dasharray="1.5 1.5"/>
<rect x="253.16" y="409.72" width="19.68" height="11.72" rx="3" fill="#ed1c24" stroke="#231f20" stroke-width="0.9"/>
<rect x="281.44" y="409.72" width="19.68" height="11.72" rx="3" fill="#00a651" stroke="#231f20" stroke-width="0.9"/>
<rect x="309.41" y="409.72" width="19.68" height="11.72" rx="3" fill="#fff200" stroke="#231f20" stroke-width="0.9"/>
<rect x="337.69" y="409.72" width="19.69" height="11.72" rx="3" fill="#00aeef" stroke="#231f20" stroke-width="0.9"/>
<text x="307.53" y="444.88"  font-size="11.6" font-weight="bold" font-style="italic" fill="#231f20" stroke="#231f20" stroke-width="0.5" text-anchor="middle" textLength="31" lengthAdjust="spacingAndGlyphs">bbk</text>
<text x="307.53" y="453.81"  font-size="5.4" font-weight="bold" fill="#1d1d28" text-anchor="middle" textLength="29" lengthAdjust="spacingAndGlyphs">RC-SMP121</text>
<path d="M229.88,84.41 H259.88" fill="none" stroke="#8f9194" stroke-width="0.8"/>
<path d="M229.88,99.25 H305.97 V114.56" fill="none" stroke="#8f9194" stroke-width="0.8"/>
<path d="M229.88,120.03 H264.56" fill="none" stroke="#8f9194" stroke-width="0.8"/>
<path d="M229.88,148.31 H264.56" fill="none" stroke="#8f9194" stroke-width="0.8"/>
<path d="M229.88,181.12 H263.0" fill="none" stroke="#8f9194" stroke-width="0.8"/>
<path d="M229.88,214.25 H269.25" fill="none" stroke="#8f9194" stroke-width="0.8"/>
<path d="M229.88,257.38 H263.0" fill="none" stroke="#8f9194" stroke-width="0.8"/>
<path d="M229.88,318.0 H276.75" fill="none" stroke="#8f9194" stroke-width="0.8"/>
<path d="M229.88,361.28 H291.91 V366.12 M264.56,361.28 V366.12" fill="none" stroke="#8f9194" stroke-width="0.8"/>
<path d="M229.88,384.25 H291.91 V393.31" fill="none" stroke="#8f9194" stroke-width="0.8"/>
<path d="M229.88,393.31 H261.44" fill="none" stroke="#8f9194" stroke-width="0.8"/>
<path d="M229.88,415.5 H250.97" fill="none" stroke="#8f9194" stroke-width="0.8"/>
<path d="M382.53,84.41 H345.5" fill="none" stroke="#8f9194" stroke-width="0.8"/>
<path d="M382.53,120.03 H343.94" fill="none" stroke="#8f9194" stroke-width="0.8"/>
<path d="M382.53,135.19 H304.88 V149.72" fill="none" stroke="#8f9194" stroke-width="0.8"/>
<path d="M382.53,148.31 H343.94" fill="none" stroke="#8f9194" stroke-width="0.8"/>
<path d="M382.53,181.12 H346.12" fill="none" stroke="#8f9194" stroke-width="0.8"/>
<path d="M382.53,225.97 H305.19" fill="none" stroke="#8f9194" stroke-width="0.8"/>
<path d="M382.53,257.38 H346.12" fill="none" stroke="#8f9194" stroke-width="0.8"/>
<path d="M382.53,288.62 H346.12" fill="none" stroke="#8f9194" stroke-width="0.8"/>
<path d="M382.53,316.91 H346.12" fill="none" stroke="#8f9194" stroke-width="0.8"/>
<path d="M382.53,361.28 H319.25 V366.12 M346.12,361.28 V366.12" fill="none" stroke="#8f9194" stroke-width="0.8"/>
<path d="M382.53,384.25 H318.94 V393.31" fill="none" stroke="#8f9194" stroke-width="0.8"/>
<path d="M382.53,393.31 H346.12" fill="none" stroke="#8f9194" stroke-width="0.8"/>
<circle cx="221.91" cy="84.41" r="4.3" fill="#c8c9cb"/>
<text x="221.91" y="87.21"  font-size="7.8" font-weight="bold" fill="#1d1d28" text-anchor="middle" textLength="3.8" lengthAdjust="spacingAndGlyphs">1</text>
<circle cx="221.91" cy="99.25" r="4.3" fill="#c8c9cb"/>
<text x="221.91" y="102.05"  font-size="7.8" font-weight="bold" fill="#1d1d28" text-anchor="middle" textLength="3.8" lengthAdjust="spacingAndGlyphs">2</text>
<circle cx="221.91" cy="120.03" r="4.3" fill="#c8c9cb"/>
<text x="221.91" y="122.83"  font-size="7.8" font-weight="bold" fill="#1d1d28" text-anchor="middle" textLength="3.8" lengthAdjust="spacingAndGlyphs">3</text>
<circle cx="221.91" cy="148.31" r="4.3" fill="#c8c9cb"/>
<text x="221.91" y="151.11"  font-size="7.8" font-weight="bold" fill="#1d1d28" text-anchor="middle" textLength="3.8" lengthAdjust="spacingAndGlyphs">4</text>
<circle cx="221.91" cy="181.12" r="4.3" fill="#c8c9cb"/>
<text x="221.91" y="183.92"  font-size="7.8" font-weight="bold" fill="#1d1d28" text-anchor="middle" textLength="3.8" lengthAdjust="spacingAndGlyphs">5</text>
<circle cx="221.91" cy="214.25" r="4.3" fill="#c8c9cb"/>
<text x="221.91" y="217.05"  font-size="7.8" font-weight="bold" fill="#1d1d28" text-anchor="middle" textLength="3.8" lengthAdjust="spacingAndGlyphs">6</text>
<circle cx="221.91" cy="257.38" r="4.3" fill="#c8c9cb"/>
<text x="221.91" y="260.18"  font-size="7.8" font-weight="bold" fill="#1d1d28" text-anchor="middle" textLength="3.8" lengthAdjust="spacingAndGlyphs">7</text>
<circle cx="221.91" cy="318.0" r="4.3" fill="#c8c9cb"/>
<text x="221.91" y="320.8"  font-size="7.8" font-weight="bold" fill="#1d1d28" text-anchor="middle" textLength="3.8" lengthAdjust="spacingAndGlyphs">8</text>
<circle cx="221.91" cy="361.28" r="4.3" fill="#c8c9cb"/>
<text x="221.91" y="364.08"  font-size="7.8" font-weight="bold" fill="#1d1d28" text-anchor="middle" textLength="3.8" lengthAdjust="spacingAndGlyphs">9</text>
<circle cx="221.91" cy="384.25" r="4.3" fill="#c8c9cb"/>
<text x="221.91" y="387.05"  font-size="7.8" font-weight="bold" fill="#1d1d28" text-anchor="middle" textLength="7.2" lengthAdjust="spacingAndGlyphs">10</text>
<circle cx="221.91" cy="393.31" r="4.3" fill="#c8c9cb"/>
<text x="221.91" y="396.11"  font-size="7.8" font-weight="bold" fill="#1d1d28" text-anchor="middle" textLength="7.2" lengthAdjust="spacingAndGlyphs">11</text>
<circle cx="221.91" cy="415.5" r="4.3" fill="#c8c9cb"/>
<text x="221.91" y="418.3"  font-size="7.8" font-weight="bold" fill="#1d1d28" text-anchor="middle" textLength="7.2" lengthAdjust="spacingAndGlyphs">12</text>
<circle cx="390.34" cy="84.41" r="4.3" fill="#c8c9cb"/>
<text x="390.34" y="87.21"  font-size="7.8" font-weight="bold" fill="#1d1d28" text-anchor="middle" textLength="7.2" lengthAdjust="spacingAndGlyphs">24</text>
<circle cx="390.34" cy="120.03" r="4.3" fill="#c8c9cb"/>
<text x="390.34" y="122.83"  font-size="7.8" font-weight="bold" fill="#1d1d28" text-anchor="middle" textLength="7.2" lengthAdjust="spacingAndGlyphs">23</text>
<circle cx="390.34" cy="135.19" r="4.3" fill="#c8c9cb"/>
<text x="390.34" y="137.99"  font-size="7.8" font-weight="bold" fill="#1d1d28" text-anchor="middle" textLength="7.2" lengthAdjust="spacingAndGlyphs">22</text>
<circle cx="390.34" cy="148.31" r="4.3" fill="#c8c9cb"/>
<text x="390.34" y="151.11"  font-size="7.8" font-weight="bold" fill="#1d1d28" text-anchor="middle" textLength="7.2" lengthAdjust="spacingAndGlyphs">21</text>
<circle cx="390.34" cy="181.12" r="4.3" fill="#c8c9cb"/>
<text x="390.34" y="183.92"  font-size="7.8" font-weight="bold" fill="#1d1d28" text-anchor="middle" textLength="7.2" lengthAdjust="spacingAndGlyphs">20</text>
<circle cx="390.34" cy="225.97" r="4.3" fill="#c8c9cb"/>
<text x="390.34" y="228.77"  font-size="7.8" font-weight="bold" fill="#1d1d28" text-anchor="middle" textLength="7.2" lengthAdjust="spacingAndGlyphs">19</text>
<circle cx="390.34" cy="257.38" r="4.3" fill="#c8c9cb"/>
<text x="390.34" y="260.18"  font-size="7.8" font-weight="bold" fill="#1d1d28" text-anchor="middle" textLength="7.2" lengthAdjust="spacingAndGlyphs">18</text>
<circle cx="390.34" cy="288.62" r="4.3" fill="#c8c9cb"/>
<text x="390.34" y="291.42"  font-size="7.8" font-weight="bold" fill="#1d1d28" text-anchor="middle" textLength="7.2" lengthAdjust="spacingAndGlyphs">17</text>
<circle cx="390.34" cy="316.91" r="4.3" fill="#c8c9cb"/>
<text x="390.34" y="319.71"  font-size="7.8" font-weight="bold" fill="#1d1d28" text-anchor="middle" textLength="7.2" lengthAdjust="spacingAndGlyphs">16</text>
<circle cx="390.34" cy="361.28" r="4.3" fill="#c8c9cb"/>
<text x="390.34" y="364.08"  font-size="7.8" font-weight="bold" fill="#1d1d28" text-anchor="middle" textLength="7.2" lengthAdjust="spacingAndGlyphs">15</text>
<circle cx="390.34" cy="384.25" r="4.3" fill="#c8c9cb"/>
<text x="390.34" y="387.05"  font-size="7.8" font-weight="bold" fill="#1d1d28" text-anchor="middle" textLength="7.2" lengthAdjust="spacingAndGlyphs">14</text>
<circle cx="390.34" cy="393.31" r="4.3" fill="#c8c9cb"/>
<text x="390.34" y="396.11"  font-size="7.8" font-weight="bold" fill="#1d1d28" text-anchor="middle" textLength="7.2" lengthAdjust="spacingAndGlyphs">13</text>
<text x="30" y="526"  font-size="8.6" font-weight="bold" fill="#111" textLength="120" lengthAdjust="spacingAndGlyphs">УСТАНОВКА БАТАРЕЕК</text>
<text x="30" y="537"  font-size="8.6" font-weight="bold" fill="#111" textLength="150" lengthAdjust="spacingAndGlyphs">ДЛЯ ПУЛЬТА ДИСТАНЦИОННОГО</text>
<text x="30" y="555.0"  font-size="6.1" fill="#1d1d28" textLength="168" lengthAdjust="spacingAndGlyphs">Откройте крышку отсека для батареек на задней</text>
<text x="30" y="563.4"  font-size="6.1" fill="#1d1d28" textLength="176" lengthAdjust="spacingAndGlyphs">стороне пульта. Вставьте две батарейки типа ААА,</text>
<text x="30" y="571.8"  font-size="6.1" fill="#1d1d28" textLength="178" lengthAdjust="spacingAndGlyphs">соблюдая полярность. Закройте крышку отсека,</text>
<text x="30" y="580.2"  font-size="6.1" fill="#1d1d28" textLength="120" lengthAdjust="spacingAndGlyphs">слегка надавив на нее до щелчка.</text>
<rect x="217" y="541" width="2.6" height="48" fill="#a7a9ac"/>
<text x="224" y="548"  font-size="7" font-weight="bold" fill="#1d1d28" textLength="66" lengthAdjust="spacingAndGlyphs">ПРИМЕЧАНИЯ</text>
<text x="224" y="557.0"  font-size="6.1" fill="#1d1d28" textLength="140" lengthAdjust="spacingAndGlyphs">• Не используйте одновременно старые и новые</text>
<text x="224" y="565.4"  font-size="6.1" fill="#1d1d28" textLength="150" lengthAdjust="spacingAndGlyphs">батарейки, а также батарейки разных типов.</text>
<text x="224" y="573.8"  font-size="6.1" fill="#1d1d28" textLength="132" lengthAdjust="spacingAndGlyphs">• Извлекайте батарейки, если пульт не будет</text>
<text x="224" y="582.2"  font-size="6.1" fill="#1d1d28" textLength="152" lengthAdjust="spacingAndGlyphs">использоваться в течение длительного времени.</text>

</svg>
  </div>
</div>
<!-- main vertical scrollbar -->
<div class="a trk" style="left:1346px;top:187px;width:20px;height:494px;"></div>
<div class="a" style="left:1346px;top:187px;width:20px;height:7px;background:#a6a6a6;"></div>
<div class="a sb" style="left:1346px;top:194px;width:20px;height:19px;"></div>
<div class="a sb" style="left:1346px;top:303px;width:20px;height:20px;"></div>
<div class="a sb" style="left:1346px;top:662px;width:20px;height:19px;"></div>
<svg style="left:1351px;top:200px;" width="10" height="6"><path d="M0 5.5 L9 5.5 L4.5 0.5Z" fill="#000"/></svg>
<svg style="left:1351px;top:669px;" width="10" height="6"><path d="M0 0.5 L9 0.5 L4.5 5.5Z" fill="#000"/></svg>
<!-- ===== Status bar ===== -->
<div class="a" style="left:0;top:681px;width:1366px;height:35px;background:#f0f0f0;"></div>
<div class="a" style="left:601px;top:687px;width:141px;height:22px;background:#fff;border:1px solid #b4b4b4;box-sizing:border-box;"></div>
<div class="t" style="left:606px;top:691.5px;font-size:13.6px;color:#222;">3 (5 / 20)</div>
<div class="a" style="left:1037px;top:687px;width:26px;height:24px;background:#c2d5f2;"></div>
<div class="t" style="left:1135px;top:692px;font-size:13px;color:#222;">79.76%</div>
<!-- status bar icons -->
<svg style="left:540px;top:681px;" width="826" height="35" viewBox="540 681 826 35">
  <!-- first / prev / next / last -->
  <path d="M559.600 692 V705 L553 698.500 Z M566.600 692 V705 L560 698.500 Z" fill="#000"/><rect x="559.800" y="692" width="1.400" height="13" fill="#000"/>
  <path d="M590.800 692 V705 L583.600 698.500 Z" fill="#000"/>
  <path d="M752.400 692 V705 L759.600 698.500 Z" fill="#000"/>
  <path d="M777.600 692 V705 L784.200 698.500 Z M784.600 692 V705 L791.200 698.500 Z" fill="#000"/><rect x="783" y="692" width="1.400" height="13" fill="#000"/>
  <path d="M731.400 697.400 H736.600 L734 700.400 Z" fill="#000"/>
  <!-- view history icons -->
  <g>
    <rect x="804.500" y="691.500" width="9" height="8" fill="#fff" stroke="#4c6a99" stroke-width="1"/><rect x="804.500" y="691.500" width="9" height="2.400" fill="#34589a"/>
    <path d="M807.500 694 V699.500 M810.500 694 V699.500 M804.500 696.800 H813.500" stroke="#8aa0c4" stroke-width="0.700"/>
    <rect x="810.500" y="697.500" width="9" height="8.500" fill="#fff" stroke="#666" stroke-width="1"/><rect x="810.500" y="697.500" width="9" height="2.400" fill="#555"/>
    <path d="M813.500 700 V706 M816.500 700 V706 M810.500 703 H819.500" stroke="#999" stroke-width="0.700"/>
    <path d="M820.600 694.500 H815.400 M817.600 692.200 L815.200 694.500 L817.600 696.800" fill="none" stroke="#3c9a6c" stroke-width="1.300"/>
  </g>
  <g opacity="0.450">
    <rect x="832.500" y="691.500" width="9" height="8" fill="#fff" stroke="#777" stroke-width="1"/><rect x="832.500" y="691.500" width="9" height="2.400" fill="#888"/>
    <path d="M835.500 694 V699.500 M838.500 694 V699.500 M832.500 696.800 H841.500" stroke="#aaa" stroke-width="0.700"/>
    <rect x="838.500" y="697.500" width="9" height="8.500" fill="#fff" stroke="#777" stroke-width="1"/><rect x="838.500" y="697.500" width="9" height="2.400" fill="#888"/>
    <path d="M841.500 700 V706 M844.500 700 V706 M838.500 703 H847.500" stroke="#aaa" stroke-width="0.700"/>
    <path d="M832.800 703.500 H837.600 M835.600 701.200 L838 703.500 L835.600 705.800" fill="none" stroke="#3c9a6c" stroke-width="1.300"/>
  </g>
  <!-- page layout icons -->
  <g fill="#fff" stroke="#777" stroke-width="1">
    <rect x="1017.500" y="692.500" width="10" height="13"/>
    <rect x="1044.500" y="690.500" width="10" height="8"/><rect x="1044.500" y="701.500" width="10" height="6.500"/>
    <rect x="1070.500" y="692.500" width="6.500" height="12"/><rect x="1079.500" y="692.500" width="6.500" height="12"/>
  </g>
  <path d="M1020 695.500 H1025 M1020 698.500 H1025 M1020 701.500 H1025 M1047 693.500 H1052 M1047 695.800 H1052 M1047 704.500 H1052 M1072.500 695.500 H1075 M1072.500 698.500 H1075 M1072.500 701.500 H1075 M1081.500 695.500 H1084 M1081.500 698.500 H1084 M1081.500 701.500 H1084" stroke="#999" stroke-width="0.800"/>
  <path d="M1098.500 691 H1104 M1098.500 694 H1104 M1098.500 697 H1104 M1107 691 H1112.500 M1107 694 H1112.500 M1107 697 H1112.500 M1098.500 700.500 H1104.500 V706.500 M1112.500 700.500 H1106.500 V706.500 M1098.500 703.500 H1102 M1109 703.500 H1112.500" fill="none" stroke="#777" stroke-width="1"/>
  <!-- zoom combo arrow, separator -->
  <path d="M1196 697 H1201.600 L1198.800 700.200 Z" fill="#000"/>
  <path d="M1205.500 690 V708" stroke="#666" stroke-width="1"/>
  <!-- zoom slider -->
  <circle cx="1216" cy="698.500" r="7" fill="none" stroke="#333" stroke-width="1.100"/><path d="M1212 698.500 H1220" stroke="#333" stroke-width="1.100"/>
  <path d="M1231 698.500 H1322" stroke="#333" stroke-width="1"/><path d="M1276.500 695 V702" stroke="#333" stroke-width="1"/>
  <rect x="1263.200" y="692" width="5.600" height="12.400" fill="#222"/>
  <circle cx="1336" cy="698.500" r="7" fill="none" stroke="#333" stroke-width="1.100"/><path d="M1332 698.500 H1340 M1336 694.500 V702.500" stroke="#333" stroke-width="1.100"/>
</svg>
<!-- ===== Taskbar ===== -->
<div class="a" style="left:0;top:716px;width:1366px;height:52px;background:#d4d0c8;"></div>
<div class="a" style="left:0;top:717px;width:1366px;height:1px;background:#fff;"></div>
<div class="a tb" style="left:2px;top:720px;width:61px;height:46px;"></div>
<div class="t" style="left:25.5px;top:736px;font-size:14.4px;font-weight:bold;color:#000;letter-spacing:-0.1px;">Пуск</div>
<div class="a tb" style="left:188px;top:720px;width:56px;height:46px;"></div>
<div class="a tb" style="left:246px;top:720px;width:56px;height:46px;"></div>
<div class="a tbp" style="left:304px;top:720px;width:56px;height:46px;"></div>
<div class="t" style="left:1006px;top:734.4px;font-size:14.2px;color:#000;">RU</div>
<div class="a" style="left:1030px;top:728px;width:1px;height:26px;background:#808080;"></div>
<div class="a" style="left:1031px;top:728px;width:1px;height:26px;background:#fff;"></div>
<div class="a" style="left:1036px;top:720px;width:330px;height:46px;box-sizing:border-box;border:1px solid;border-color:#808080 #fff #fff #808080;"></div>
<div class="c" style="left:1257px;top:725px;width:80px;font-size:15px;color:#000;">18:56</div>
<div class="c" style="left:1248px;top:745.4px;width:100px;font-size:14.3px;color:#000;">16.05.2014</div>
<style>
.tb{background:#d4d0c8;box-sizing:border-box;border:1px solid;border-color:#fff #404040 #404040 #fff;box-shadow:inset -1px -1px 0 #808080;}
.tbp{background:#fcfcfb;box-sizing:border-box;border:1px solid;border-color:#404040 #fff #fff #404040;box-shadow:inset 1px 1px 0 #808080;}
</style>
<!-- taskbar icons -->
<svg style="left:0;top:716px;" width="1366" height="52" viewBox="0 716 1366 52" font-family="Liberation Sans, sans-serif">
<defs>
  <radialGradient id="yb" cx="0.4" cy="0.3" r="0.8"><stop offset="0" stop-color="#fff"/><stop offset="0.6" stop-color="#ececec"/><stop offset="1" stop-color="#b8b8b8"/></radialGradient>
  <linearGradient id="tab" x1="0" y1="0" x2="0" y2="1"><stop offset="0" stop-color="#f7a0c8"/><stop offset="0.5" stop-color="#f0342c"/><stop offset="1" stop-color="#f7931e"/></linearGradient>
  <linearGradient id="doc" x1="0" y1="0" x2="0" y2="1"><stop offset="0" stop-color="#eef5fc"/><stop offset="1" stop-color="#c4dcf2"/></linearGradient>
</defs>
<!-- windows flag -->
<path d="M7.500 734.600 C9.800 733.200 12 733.200 14.200 734.400 L12.600 740.600 C10.400 739.600 8.200 739.600 5.900 740.800 Z" fill="#e8542c"/>
<path d="M15.400 734.800 C17.600 736 19.800 736 22.600 734.600 L21 740.800 C18.400 742 16.200 742 13.800 741 Z" fill="#78b82a"/>
<path d="M5.500 742.200 C7.800 741 10 741 12.200 742 L10.600 748.200 C8.400 747.200 6.200 747.200 3.900 748.400 Z" fill="#3a8ee0"/>
<path d="M13.400 742.400 C15.600 743.400 17.800 743.400 20.600 742.200 L19 748.400 C16.400 749.600 14.200 749.600 11.800 748.600 Z" fill="#f8c21c"/>
<!-- paint -->
<ellipse cx="100" cy="735" rx="17.500" ry="11.500" fill="#f7d8d0" stroke="#c98878" stroke-width="1"/>
<ellipse cx="90.500" cy="734" rx="3.600" ry="2.600" fill="#d4d0c8"/>
<circle cx="99.600" cy="727.600" r="2.600" fill="#18b4e8"/><circle cx="107.800" cy="730" r="2.600" fill="#f8e020"/><circle cx="113" cy="737.400" r="2.900" fill="#e81c24"/>
<path d="M86 742 H114 L119.600 759 H80.400 Z" fill="#1c2c6c"/>
<path d="M80.400 759 H119.600 V762 Q100 763.600 80.400 762 Z" fill="#141c48"/>
<path d="M88.500 744 H111.500 L115.500 756.500 H84.500 Z" fill="url(#tab)"/>
<path d="M84.600 725 L87 724 L102.500 748.500 L100.600 749.500 Z" fill="#a83c24"/>
<path d="M100.200 747.600 L103 746.200 L104.600 752.600 Z" fill="#f0c8a0"/>
<!-- document -->
<path d="M142.600 725.600 H173.400 V728 L172 755 Q173 759 174 760.400 H141.800 Q142.800 759 143.800 755 L142.600 728 Z" fill="url(#doc)" stroke="#8cb4d8" stroke-width="0.800"/>
<rect x="142.600" y="724.400" width="30.800" height="3" fill="#7cacd8"/>
<text x="152.500" y="745" font-family="Liberation Serif, serif" font-size="18" font-weight="bold" fill="#f09838" text-anchor="middle">A</text>
<path d="M160 734.500 H170 M160 737.500 H170 M160 740.500 H170" stroke="#5c94d4" stroke-width="1.200"/>
<path d="M146.500 748.500 H169 M146.500 751.500 H162 M146.500 754.500 H166" stroke="#b4cce4" stroke-width="1"/>
<!-- yandex -->
<circle cx="215.500" cy="741.800" r="19" fill="url(#yb)"/>
<path d="M198.600 729.200 C203.600 727.600 208.800 732.600 213.600 739.800 C217.600 732.600 224.600 727 231.800 728.400 C232.600 731 232.800 732.600 232.400 734.200 C226 734.200 220.800 739.200 217.800 744.600 C217.400 751.800 217.800 757.200 219 760.400 C216 761.200 213.600 761 211.600 760.200 C211 755.600 210.600 750.200 210.800 745.200 C207.600 739.200 202.600 735.200 197.200 734.600 C197.200 732.600 197.600 730.800 198.600 729.200 Z" fill="#f01c24"/>
<!-- skype -->
<circle cx="269" cy="737.500" r="13.500" fill="#10a4e4"/><circle cx="277.500" cy="746" r="13.500" fill="#10a4e4"/><circle cx="273.200" cy="741.800" r="16.500" fill="#10a4e4"/>
<text x="272.600" y="754.600" font-size="35" font-weight="bold" fill="#fff" text-anchor="middle" textLength="23" lengthAdjust="spacingAndGlyphs">S</text>
<circle cx="286.400" cy="755.400" r="6.600" fill="#f8a818" stroke="#c87808" stroke-width="0.600"/>
<text x="286.400" y="759.200" font-size="10.500" font-weight="bold" fill="#000" text-anchor="middle">2</text>
<!-- foxit -->
<g transform="translate(311.800,723) scale(2.020,1.985) translate(-6,-2)">
  <rect x="6" y="2" width="20" height="20" rx="1.800" fill="#f0860f"/>
  <path d="M16.200 4.400 H23.400 V19.600 H8.600 V12.400" fill="none" stroke="#fff" stroke-width="0.800"/>
  <path d="M8.200 8.600 C10 7.600 11.400 6.200 12.600 4.400 L13.800 4.400 C13 6 12.200 7 11 7.800 C10 8.200 9 8.800 8.200 9.600 Z" fill="#fff"/>
  <path d="M8.400 12.400 C10.400 10.200 12.400 10.400 13.600 9.400 C14.600 8 15.200 6 16.400 4.200 L17.400 4.800 C16.200 6.600 16 8.800 14.800 10 C13.400 11.200 10.600 11 8.800 13 Z" fill="#fff"/>
</g>
<text x="332.300" y="756.400" font-size="13.400" font-weight="bold" fill="#fff" text-anchor="middle" textLength="28" lengthAdjust="spacingAndGlyphs">PDF</text>
<!-- tray: action center flag -->
<path d="M1046.500 734 V752.500" stroke="#888" stroke-width="1.800"/>
<path d="M1047.500 734.400 C1051 733.400 1053 737.400 1057 737 C1059.500 736.800 1061.500 738 1063.600 739.600 L1062.800 747.600 C1060 745.600 1057.500 745.400 1055 745.600 C1051.500 745.800 1050.500 743.400 1047.500 744.400 Z" fill="#fff" stroke="#b0b0b0" stroke-width="0.700"/>
<circle cx="1058.500" cy="747.800" r="4.900" fill="#e0302c" stroke="#fff" stroke-width="0.800"/>
<path d="M1056.300 745.600 L1060.700 750 M1060.700 745.600 L1056.300 750" stroke="#fff" stroke-width="1.500"/>
<!-- tray: green + 2 -->
<path d="M1075 734 Q1078 732.600 1081 734 Q1087 733 1092 736 Q1094.500 742 1092.600 748 Q1090 752.600 1084 752 Q1079.600 751.600 1078.400 747.600 Q1075 744 1075 734 Z" fill="#8cc43c"/>
<circle cx="1086.700" cy="743" r="6.500" fill="#f8b020" stroke="#d88c10" stroke-width="0.600"/>
<text x="1086.700" y="747" font-size="10.500" font-weight="bold" fill="#000" text-anchor="middle">2</text>
<!-- tray: avira -->
<rect x="1104" y="732.800" width="20.200" height="19.800" rx="1.500" fill="#d81c24"/>
<path d="M1107.200 745.600 C1107.200 737.400 1118 734.600 1121.600 742 C1119.600 740.800 1117.600 741 1116.200 742.400 C1114.600 740.600 1111.600 740.800 1110.800 743 C1109.600 743 1108 744 1107.200 745.600 Z" fill="#fff"/>
<path d="M1113.600 741.600 C1114.600 744.600 1116.200 747 1117 748.400 C1117.800 749.800 1120 749.400 1120 747.600" fill="none" stroke="#fff" stroke-width="1.400"/>
<!-- tray: usb -->
<path d="M1134.400 743.600 L1146 737 L1151.600 738.600 L1140.600 746.600 Z" fill="#9a9a9a"/><path d="M1134.400 743.600 L1140.600 746.600 V748.600 L1134.400 745.600 Z" fill="#6a6a6a"/>
<path d="M1143 737.200 L1153.600 735.400 L1154.400 736.600 L1146 739 Z" fill="#444"/>
<circle cx="1149.500" cy="747.800" r="4.300" fill="#3aa63a" stroke="#287828" stroke-width="0.600"/><path d="M1147.400 747.800 L1149 749.600 L1151.800 745.800" fill="none" stroke="#fff" stroke-width="1.300"/>
<!-- tray: battery -->
<rect x="1164.800" y="735.200" width="9.600" height="16.600" rx="1" fill="#b4b4b4" stroke="#707070" stroke-width="1"/><rect x="1167.600" y="733.400" width="4" height="2" fill="#707070"/>
<path d="M1165 743 L1173.600 751.400 M1173.600 743 L1165 751.400" stroke="#e0201c" stroke-width="1.900"/>
<path d="M1177.600 733.600 V737 M1182 733.600 V737" stroke="#fff" stroke-width="1.500"/><path d="M1175.800 737 H1183.800 V741 Q1183.800 743.400 1181.200 743.400 V752 H1178.400 V743.400 Q1175.800 743.400 1175.800 741 Z" fill="#fff" stroke="#909090" stroke-width="0.600"/>
<!-- tray: network -->
<rect x="1196" y="733.200" width="4.600" height="6.400" fill="#fff" stroke="#555" stroke-width="1"/>
<path d="M1198.300 739.600 V750.600 H1206" fill="none" stroke="#555" stroke-width="1.200"/>
<rect x="1201.500" y="736.500" width="12" height="10" fill="#b8c4d0" stroke="#555" stroke-width="1.200"/>
<circle cx="1209" cy="748" r="4.600" fill="#2c78d8"/><path d="M1206 746.500 Q1208 744 1210.500 745.500 Q1212.500 747.500 1210 749.600 Q1207.500 750.500 1206 746.500 Z" fill="#4cb848"/>
<!-- tray: speaker -->
<path d="M1226.600 739.600 H1230 L1236.600 733.600 V752 L1230 746.600 H1226.600 Z" fill="#f4f4f4" stroke="#808080" stroke-width="1.100"/>
<path d="M1241 738.600 Q1244 743 1241 747.400" fill="none" stroke="#f8f8f8" stroke-width="1.300"/>
<!-- show desktop -->
<path d="M1342.600 736.800 L1360.400 735.600 V747.600 L1342.600 746.800 Z" fill="#3c80dc"/><path d="M1344 738.200 L1359 737.200 V741 L1344 744 Z" fill="#5c98e4"/><path d="M1342.600 746.800 L1360.400 747.600 L1359.400 749.400 L1343 748.400 Z" fill="#98bcec"/>
</svg>
</body>
</html>
